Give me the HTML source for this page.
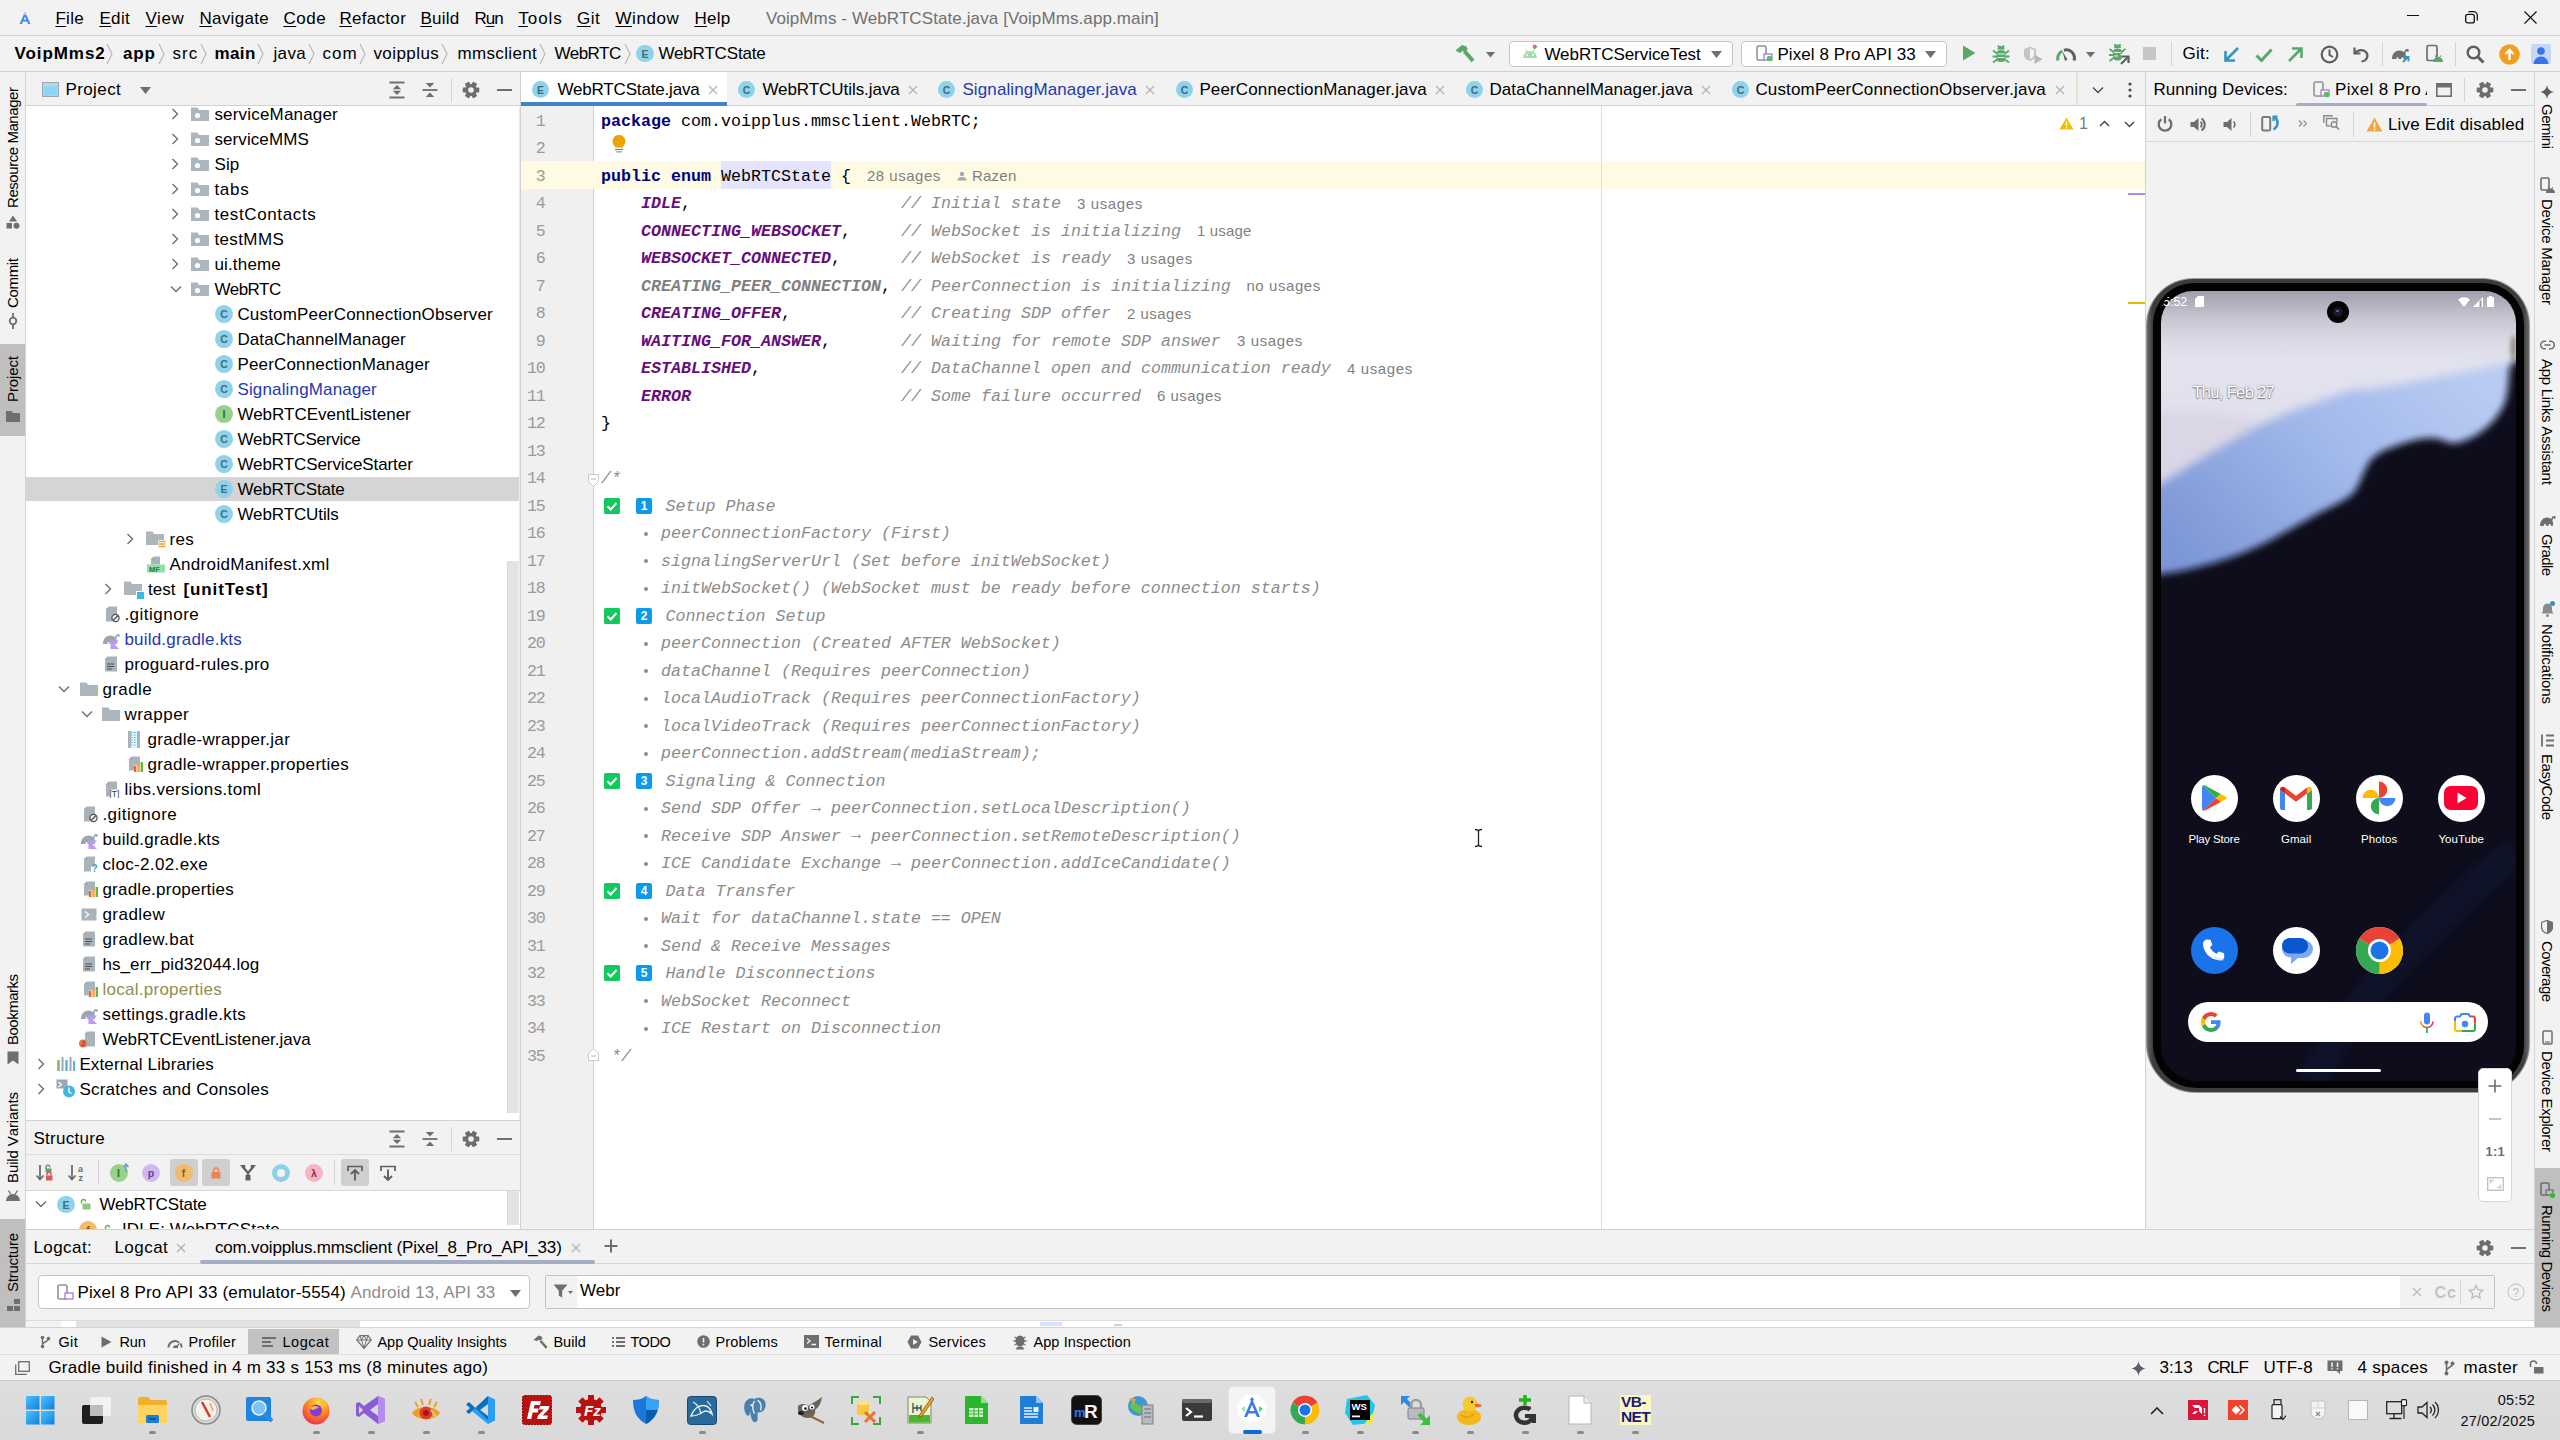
<!DOCTYPE html>
<html lang="en"><head><meta charset="utf-8"><title>VoipMms - WebRTCState.java</title>
<style>
*{box-sizing:border-box;margin:0;padding:0}
html,body{width:2560px;height:1440px;overflow:hidden;background:#f2f2f2;font-family:"Liberation Sans",sans-serif;}
.a{position:absolute;display:block}
.t{position:absolute;white-space:pre;font-kerning:none}
.ic{border-radius:50%;text-align:center;font:700 10.500px "Liberation Sans",sans-serif;}
.v{position:absolute;white-space:pre;font:400 17px "Liberation Sans",sans-serif;color:#000;transform-origin:0 0;height:24px;line-height:24px;font-kerning:none}
u{text-decoration-thickness:1px;text-underline-offset:2px}
</style></head>
<body>
<div class="a" style="left:0px;top:0px;width:2560px;height:36px;background:#f2f2f2;"></div>
<svg class="a" style="left:18.0px;top:11.0px;" width="14" height="14" viewBox="0 0 14 14"><path d="M7 1l5.500 12h-2.300l-1.100-2.600h-4.200l-1.100 2.600h-2.300z" fill="#4285f4"/><path d="M7 5.500l1.400 3.300h-2.800z" fill="#f2f2f2"/><circle cx="7" cy="3" r="1.300" fill="#9fc3ff"/></svg>
<span class="t" style="left:55.4px;top:7.0px;height:24px;line-height:24px;font:400 17px 'Liberation Sans', sans-serif;line-height:24px;color:#000;letter-spacing:0.331px;"><u>F</u>ile</span>
<span class="t" style="left:99.4px;top:7.0px;height:24px;line-height:24px;font:400 17px 'Liberation Sans', sans-serif;line-height:24px;color:#000;letter-spacing:0.368px;"><u>E</u>dit</span>
<span class="t" style="left:145.4px;top:7.0px;height:24px;line-height:24px;font:400 17px 'Liberation Sans', sans-serif;line-height:24px;color:#000;letter-spacing:0.618px;"><u>V</u>iew</span>
<span class="t" style="left:199.4px;top:7.0px;height:24px;line-height:24px;font:400 17px 'Liberation Sans', sans-serif;line-height:24px;color:#000;letter-spacing:0.327px;"><u>N</u>avigate</span>
<span class="t" style="left:283.4px;top:7.0px;height:24px;line-height:24px;font:400 17px 'Liberation Sans', sans-serif;line-height:24px;color:#000;letter-spacing:0.586px;"><u>C</u>ode</span>
<span class="t" style="left:339.4px;top:7.0px;height:24px;line-height:24px;font:400 17px 'Liberation Sans', sans-serif;line-height:24px;color:#000;letter-spacing:0.307px;"><u>R</u>efactor</span>
<span class="t" style="left:420.4px;top:7.0px;height:24px;line-height:24px;font:400 17px 'Liberation Sans', sans-serif;line-height:24px;color:#000;letter-spacing:0.272px;"><u>B</u>uild</span>
<span class="t" style="left:474.4px;top:7.0px;height:24px;line-height:24px;font:400 17px 'Liberation Sans', sans-serif;line-height:24px;color:#000;letter-spacing:-0.894px;">R<u>u</u>n</span>
<span class="t" style="left:518.4px;top:7.0px;height:24px;line-height:24px;font:400 17px 'Liberation Sans', sans-serif;line-height:24px;color:#000;letter-spacing:0.928px;"><u>T</u>ools</span>
<span class="t" style="left:576.9px;top:7.0px;height:24px;line-height:24px;font:400 17px 'Liberation Sans', sans-serif;line-height:24px;color:#000;letter-spacing:0.583px;"><u>G</u>it</span>
<span class="t" style="left:615.4px;top:7.0px;height:24px;line-height:24px;font:400 17px 'Liberation Sans', sans-serif;line-height:24px;color:#000;letter-spacing:0.586px;"><u>W</u>indow</span>
<span class="t" style="left:694.4px;top:7.0px;height:24px;line-height:24px;font:400 17px 'Liberation Sans', sans-serif;line-height:24px;color:#000;letter-spacing:0.310px;"><u>H</u>elp</span>
<span class="t" style="left:765.9px;top:7.0px;height:24px;line-height:24px;font:400 17px 'Liberation Sans', sans-serif;line-height:24px;color:#707070;letter-spacing:0.097px;">VoipMms - WebRTCState.java [VoipMms.app.main]</span>
<div class="a" style="left:2407px;top:14.7px;width:12px;height:1.3px;background:#111;"></div>
<svg class="a" style="left:2464.5px;top:10.5px;" width="13" height="13" viewBox="0 0 13 13"><rect x="0.700" y="3.300" width="8.600" height="8.600" rx="2" fill="none" stroke="#111" stroke-width="1.300"/><path d="M3.500 0.700h5a3.800 3.800 0 013.800 3.800v5" fill="none" stroke="#111" stroke-width="1.300"/></svg>
<svg class="a" style="left:2523.5px;top:10.5px;" width="13" height="13" viewBox="0 0 13 13"><path d="M0.500 0.500l12 12M12.500 0.500l-12 12" stroke="#111" stroke-width="1.200"/></svg>
<div class="a" style="left:0px;top:36px;width:2560px;height:36px;background:#f2f2f2;"></div>
<div class="a" style="left:0px;top:35px;width:2560px;height:1px;background:#d6d6d6;"></div>
<div class="a" style="left:0px;top:71px;width:2560px;height:1px;background:#d1d1d1;"></div>
<span class="t" style="left:14.4px;top:42.0px;height:24px;line-height:24px;font:700 17px 'Liberation Sans', sans-serif;line-height:24px;color:#000;letter-spacing:0.948px;">VoipMms2</span>
<span class="t" style="left:122.9px;top:42.0px;height:24px;line-height:24px;font:700 17px 'Liberation Sans', sans-serif;line-height:24px;color:#000;letter-spacing:0.833px;">app</span>
<span class="t" style="left:172.4px;top:42.0px;height:24px;line-height:24px;font:400 17px 'Liberation Sans', sans-serif;line-height:24px;color:#000;letter-spacing:1.114px;">src</span>
<span class="t" style="left:214.4px;top:42.0px;height:24px;line-height:24px;font:700 17px 'Liberation Sans', sans-serif;line-height:24px;color:#000;letter-spacing:0.404px;">main</span>
<span class="t" style="left:273.4px;top:42.0px;height:24px;line-height:24px;font:400 17px 'Liberation Sans', sans-serif;line-height:24px;color:#000;letter-spacing:0.404px;">java</span>
<span class="t" style="left:322.4px;top:42.0px;height:24px;line-height:24px;font:400 17px 'Liberation Sans', sans-serif;line-height:24px;color:#000;letter-spacing:1.137px;">com</span>
<span class="t" style="left:373.4px;top:42.0px;height:24px;line-height:24px;font:400 17px 'Liberation Sans', sans-serif;line-height:24px;color:#000;letter-spacing:0.432px;">voipplus</span>
<span class="t" style="left:457.4px;top:42.0px;height:24px;line-height:24px;font:400 17px 'Liberation Sans', sans-serif;line-height:24px;color:#000;letter-spacing:0.361px;">mmsclient</span>
<span class="t" style="left:554.4px;top:42.0px;height:24px;line-height:24px;font:400 17px 'Liberation Sans', sans-serif;line-height:24px;color:#000;letter-spacing:-0.476px;">WebRTC</span>
<svg class="a" style="left:105.5px;top:42.5px;" width="7" height="22" viewBox="0 0 7 22"><path d="M1 1l5 10-5 10" fill="none" stroke="#b4b4b4" stroke-width="1.100"/></svg>
<svg class="a" style="left:157.5px;top:42.5px;" width="7" height="22" viewBox="0 0 7 22"><path d="M1 1l5 10-5 10" fill="none" stroke="#b4b4b4" stroke-width="1.100"/></svg>
<svg class="a" style="left:199.5px;top:42.5px;" width="7" height="22" viewBox="0 0 7 22"><path d="M1 1l5 10-5 10" fill="none" stroke="#b4b4b4" stroke-width="1.100"/></svg>
<svg class="a" style="left:256.5px;top:42.5px;" width="7" height="22" viewBox="0 0 7 22"><path d="M1 1l5 10-5 10" fill="none" stroke="#b4b4b4" stroke-width="1.100"/></svg>
<svg class="a" style="left:307.5px;top:42.5px;" width="7" height="22" viewBox="0 0 7 22"><path d="M1 1l5 10-5 10" fill="none" stroke="#b4b4b4" stroke-width="1.100"/></svg>
<svg class="a" style="left:358.5px;top:42.5px;" width="7" height="22" viewBox="0 0 7 22"><path d="M1 1l5 10-5 10" fill="none" stroke="#b4b4b4" stroke-width="1.100"/></svg>
<svg class="a" style="left:440.5px;top:42.5px;" width="7" height="22" viewBox="0 0 7 22"><path d="M1 1l5 10-5 10" fill="none" stroke="#b4b4b4" stroke-width="1.100"/></svg>
<svg class="a" style="left:538.5px;top:42.5px;" width="7" height="22" viewBox="0 0 7 22"><path d="M1 1l5 10-5 10" fill="none" stroke="#b4b4b4" stroke-width="1.100"/></svg>
<svg class="a" style="left:623.5px;top:42.5px;" width="7" height="22" viewBox="0 0 7 22"><path d="M1 1l5 10-5 10" fill="none" stroke="#b4b4b4" stroke-width="1.100"/></svg>
<div class="a ic" style="left:636.1px;top:44.6px;width:17.8px;height:17.8px;background:#8fd3ea;color:#3f6d7d;line-height:18.8px;">E</div>
<span class="t" style="left:658.4px;top:42.0px;height:24px;line-height:24px;font:400 17px 'Liberation Sans', sans-serif;line-height:24px;color:#000;letter-spacing:-0.158px;">WebRTCState</span>
<svg class="a" style="left:1455.0px;top:44.0px;" width="20" height="19" viewBox="0 0 20 19"><path d="M0.500 6.500L7 1l4.500 1.500 1.200 3-3 2.500-2.200-1-2.500 2z" fill="#59a869"/><path d="M8 8.500l3-2.500 8.500 9.500-3 2.700z" fill="#59a869"/></svg>
<svg class="a" style="left:1485.5px;top:52.0px;" width="9" height="6" viewBox="0 0 9 6"><path d="M0 0h9l-4.500 5.500z" fill="#6e6e6e"/></svg>
<div class="a" style="left:1509px;top:40.5px;width:224px;height:26.0px;background:#fff;border:1px solid #c4c4c4;border-radius:4px;"></div>
<svg class="a" style="left:1521.0px;top:44.0px;" width="18" height="16" viewBox="0 0 18 16"><path d="M2 14a7 7 0 0114 0z" fill="#a4dcb0"/><circle cx="6" cy="11" r="1" fill="#fff"/><circle cx="12" cy="11" r="1" fill="#fff"/><path d="M4.500 5.500l1.800 2.500M13.500 5.500l-1.800 2.500" stroke="#a4dcb0" stroke-width="1.200"/><path d="M12 1l3 3M15 1l-3 3" stroke="#e05555" stroke-width="1.200"/><path d="M13 5l3-3" stroke="#59a869" stroke-width="1.400"/></svg>
<span class="t" style="left:1544.4px;top:43.0px;height:24px;line-height:24px;font:400 17px 'Liberation Sans', sans-serif;line-height:24px;color:#000;letter-spacing:-0.047px;">WebRTCServiceTest</span>
<svg class="a" style="left:1710.5px;top:50.5px;" width="11" height="7" viewBox="0 0 11 7"><path d="M0 0h11l-5.500 7z" fill="#6e6e6e"/></svg>
<div class="a" style="left:1741px;top:40.5px;width:206px;height:26.0px;background:#fff;border:1px solid #c4c4c4;border-radius:4px;"></div>
<svg class="a" style="left:1756.0px;top:45.0px;" width="18" height="18" viewBox="0 0 18 18"><rect x="1" y="1" width="9" height="14" rx="1.500" fill="none" stroke="#8a949b" stroke-width="1.600"/><rect x="8" y="9" width="8" height="6" fill="#fff" stroke="#a57bd8" stroke-width="1.300"/><circle cx="13.500" cy="13.500" r="2.800" fill="#59c25b"/></svg>
<span class="t" style="left:1777.4px;top:43.0px;height:24px;line-height:24px;font:400 17px 'Liberation Sans', sans-serif;line-height:24px;color:#000;letter-spacing:0.081px;">Pixel 8 Pro API 33</span>
<svg class="a" style="left:1924.5px;top:50.5px;" width="11" height="7" viewBox="0 0 11 7"><path d="M0 0h11l-5.500 7z" fill="#6e6e6e"/></svg>
<svg class="a" style="left:1962.0px;top:45.0px;" width="14" height="16" viewBox="0 0 14 16"><path d="M1 0.500l12.500 7.500-12.500 7.500z" fill="#59a869"/></svg>
<svg class="a" style="left:1992.0px;top:45.0px;" width="18" height="18" viewBox="0 0 18 18"><rect x="4.500" y="5" width="9" height="12" rx="4" fill="#59a869"/><path d="M5.500 4.500a3.500 3.500 0 017 0z" fill="#59a869"/><path d="M1 5.500l4 3M17 5.500l-4 3M0.500 11.500h5M17.500 11.500h-5M1 17.500l4-3M17 17.500l-4-3M6 0.500l1.500 2M12 0.500l-1.500 2" stroke="#59a869" stroke-width="1.800"/><path d="M5.500 9h7M5.500 12.500h7" stroke="#f2f2f2" stroke-width="1.100"/></svg>
<svg class="a" style="left:2023.0px;top:45.5px;" width="20" height="18" viewBox="0 0 20 18"><path d="M1 3l6-2.500 6 2.500v6c0 3-3 5-6 6-3-1-6-3-6-6z" fill="#c4c4c4"/><path d="M7 2.500v10.500c2-.8 4-2.300 4-4.500v-4.500z" fill="#f2f2f2"/><path d="M11.500 8.500l8 4.700-8 4.700z" fill="#b8b8b8"/></svg>
<svg class="a" style="left:2056.0px;top:46.0px;" width="20" height="16" viewBox="0 0 20 16"><path d="M2 14.500a8 8 0 014.500-9.500" fill="none" stroke="#59a869" stroke-width="3"/><path d="M8 4.300a8 8 0 0110 10.200" fill="none" stroke="#5e5e5e" stroke-width="3"/><path d="M6.500 5.500l5 8-2.500 1.500z" fill="#5e5e5e"/></svg>
<svg class="a" style="left:2085.5px;top:52.0px;" width="9" height="6" viewBox="0 0 9 6"><path d="M0 0h9l-4.500 5.500z" fill="#6e6e6e"/></svg>
<svg class="a" style="left:2108.5px;top:44.0px;" width="21" height="21" viewBox="0 0 21 21"><rect x="4" y="4.500" width="9" height="12" rx="4" fill="#59a869"/><path d="M5 4a3.500 3.500 0 017 0z" fill="#59a869"/><path d="M0.500 5l4 3M16.500 5l-4 3M0 11h5M0.500 17l4-3M5.500 0l1.500 2M11.500 0l-1.500 2" stroke="#59a869" stroke-width="1.800"/><path d="M5 8.500h7M5 12h4" stroke="#f2f2f2" stroke-width="1.100"/><path d="M11 10h9.500v9.500z" fill="#f2f2f2"/><path d="M13 12.500h6.500v6.500" fill="none" stroke="#5e5e5e" stroke-width="2.200"/><path d="M12 20l7-7" stroke="#5e5e5e" stroke-width="2.200"/></svg>
<div class="a" style="left:2143px;top:47px;width:13px;height:13px;background:#c6c6c6;"></div>
<div class="a" style="left:2171px;top:42px;width:1px;height:24px;background:#d4d4d4;"></div>
<span class="t" style="left:2182.4px;top:42.0px;height:24px;line-height:24px;font:400 17px 'Liberation Sans', sans-serif;line-height:24px;color:#000;letter-spacing:0.316px;">Git:</span>
<svg class="a" style="left:2223.5px;top:47.0px;" width="15" height="15" viewBox="0 0 15 15"><path d="M14 1L2.500 12.500M1.500 4v9.500h9.500" fill="none" stroke="#3592c4" stroke-width="2.600"/></svg>
<svg class="a" style="left:2255.0px;top:47.5px;" width="18" height="14" viewBox="0 0 18 14"><path d="M1.500 7.500l5 5 10-11" fill="none" stroke="#59a869" stroke-width="3"/></svg>
<svg class="a" style="left:2287.5px;top:47.0px;" width="15" height="15" viewBox="0 0 15 15"><path d="M1 14L12.500 2.500M4 1.500h9.500v9.500" fill="none" stroke="#59a869" stroke-width="2.600"/></svg>
<svg class="a" style="left:2319.5px;top:44.5px;" width="19" height="19" viewBox="0 0 19 19"><circle cx="9.500" cy="9.500" r="7.800" fill="none" stroke="#5e5e5e" stroke-width="2.200"/><path d="M9.500 4.500v5.500l3.500 2" fill="none" stroke="#5e5e5e" stroke-width="2"/></svg>
<svg class="a" style="left:2352.5px;top:45.5px;" width="17" height="17" viewBox="0 0 17 17"><path d="M1.500 1.500v6h6" fill="none" stroke="#5e5e5e" stroke-width="2.200"/><path d="M2 7.500c2.500-4 8-4.500 11-1.500 3 3.500 1 9-4.500 9.500" fill="none" stroke="#5e5e5e" stroke-width="2.200"/></svg>
<div class="a" style="left:2382px;top:42px;width:1px;height:24px;background:#d4d4d4;"></div>
<svg class="a" style="left:2391.0px;top:45.0px;" width="22" height="18" viewBox="0 0 22 18"><path d="M1 14c0-5 3-8.500 7.500-8.500 2.200 0 3.500.8 4.300 1.800.7-1.600 1.500-3.600 3.600-3.400 1.800.2 2 2.300.6 2.800-.9.3-1.500-.3-1.300-1-.9.4-1 1.700-1.400 3.200 1.100 2 .9 4.100.7 5.100h-2.500c0-1-.2-2-1-2-.9 0-1 1-1 2h-3c0-1-.2-2-1-2s-1 1-1 2z" fill="#6e6e6e"/><path d="M12 17l5-5M13 12h4.500v4.500" fill="none" stroke="#3592c4" stroke-width="1.800"/></svg>
<svg class="a" style="left:2425.0px;top:44.0px;" width="20" height="20" viewBox="0 0 20 20"><rect x="2" y="1.500" width="10" height="15" rx="1.500" fill="none" stroke="#6e6e6e" stroke-width="1.700"/><path d="M8 18a5 5 0 0110 0z" fill="#59a869"/><path d="M10 11.500l1.500 2M16 11.500l-1.500 2" stroke="#59a869" stroke-width="1.200"/></svg>
<div class="a" style="left:2455px;top:42px;width:1px;height:24px;background:#d4d4d4;"></div>
<svg class="a" style="left:2465.5px;top:45.0px;" width="19" height="19" viewBox="0 0 19 19"><circle cx="7.500" cy="7.500" r="5.800" fill="none" stroke="#5e5e5e" stroke-width="2.400"/><path d="M11.500 11.500l6 6" stroke="#5e5e5e" stroke-width="3"/></svg>
<svg class="a" style="left:2498.5px;top:43.5px;" width="21" height="21" viewBox="0 0 21 21"><circle cx="10.500" cy="10.500" r="10.300" fill="#f0a020"/><path d="M10.500 16V7M6.500 10l4-4 4 4" fill="none" stroke="#fff" stroke-width="2.400"/></svg>
<svg class="a" style="left:2531.0px;top:44.0px;" width="20" height="20" viewBox="0 0 20 20"><rect width="20" height="20" rx="2" fill="#c5d6f7"/><circle cx="10" cy="7" r="3.800" fill="#3574f0"/><path d="M2.500 20a7.500 7.500 0 0115 0z" fill="#3574f0"/></svg>
<div class="a" style="left:0px;top:72px;width:26px;height:1255px;background:#f2f2f2;"></div>
<div class="a" style="left:25px;top:72px;width:1px;height:1255px;background:#d4d4d4;"></div>
<div class="a" style="left:0px;top:344px;width:25px;height:91.5px;background:#bfbfbf;"></div>
<div class="a" style="left:0px;top:1219px;width:25px;height:108px;background:#bfbfbf;"></div>
<span class="v" style="left:1.1999999999999993px;top:208px;transform:rotate(-90deg);color:#000;font-size:15px;letter-spacing:-0.439px;">Resource Manager</span>
<svg class="a" style="left:6.0px;top:215.0px;" width="14" height="14" viewBox="0 0 14 14"><path d="M7 0.500l4 6h-8z" fill="#6e6e6e"/><rect x="0.500" y="8" width="5.500" height="5.500" fill="#6e6e6e"/><circle cx="10.500" cy="10.700" r="3" fill="#6e6e6e"/></svg>
<span class="v" style="left:1.1999999999999993px;top:308px;transform:rotate(-90deg);color:#000;font-size:15px;letter-spacing:-0.334px;">Commit</span>
<svg class="a" style="left:6.0px;top:313.0px;" width="14" height="16" viewBox="0 0 14 16"><circle cx="7" cy="8" r="3.300" fill="none" stroke="#6e6e6e" stroke-width="1.800"/><path d="M7 0v4.500M7 11.500v4.500" stroke="#6e6e6e" stroke-width="1.800"/></svg>
<span class="v" style="left:1.1999999999999993px;top:402px;transform:rotate(-90deg);color:#000;font-size:15px;letter-spacing:-0.115px;">Project</span>
<svg class="a" style="left:6.0px;top:410.0px;" width="14" height="12" viewBox="0 0 14 12"><path d="M0 1h5.500l1.500 2h7v9h-14z" fill="#6e6e6e"/></svg>
<span class="v" style="left:1.1999999999999993px;top:1045px;transform:rotate(-90deg);color:#000;font-size:15px;letter-spacing:-0.504px;">Bookmarks</span>
<svg class="a" style="left:7.0px;top:1051.0px;" width="12" height="14" viewBox="0 0 12 14"><path d="M0.500 0.500h11v13l-5.500-4-5.500 4z" fill="#6e6e6e"/></svg>
<span class="v" style="left:1.1999999999999993px;top:1183px;transform:rotate(-90deg);color:#000;font-size:15px;letter-spacing:-0.111px;">Build Variants</span>
<svg class="a" style="left:6.0px;top:1189.5px;" width="14" height="11" viewBox="0 0 14 11"><path d="M0 11a7 7 0 0114 0z" fill="#6e6e6e"/><path d="M2.500 0.500l2.500 4M11.500 0.500l-2.500 4" stroke="#6e6e6e" stroke-width="1.300"/></svg>
<span class="v" style="left:1.1999999999999993px;top:1292px;transform:rotate(-90deg);color:#000;font-size:15px;letter-spacing:-0.232px;">Structure</span>
<svg class="a" style="left:6.5px;top:1299.0px;" width="13" height="12" viewBox="0 0 13 12"><rect x="7" y="0" width="6" height="5" fill="#6e6e6e"/><rect x="0" y="7" width="6" height="5" fill="#6e6e6e"/><rect x="7" y="7" width="6" height="5" fill="#6e6e6e"/></svg>
<div class="a" style="left:26px;top:72px;width:494px;height:35px;background:#f2f2f2;"></div>
<div class="a" style="left:26px;top:105px;width:494px;height:1px;background:#d1d1d1;"></div>
<svg class="a" style="left:41.5px;top:82.0px;" width="17" height="15" viewBox="0 0 17 15"><rect x="0.500" y="0.500" width="16" height="14" fill="#c9d0d6" stroke="#9aa7b0"/><rect x="2" y="4" width="13" height="9.500" fill="#8dd6f3"/></svg>
<span class="t" style="left:65.4px;top:78.0px;height:24px;line-height:24px;font:400 17px 'Liberation Sans', sans-serif;line-height:24px;color:#000;letter-spacing:0.413px;">Project</span>
<svg class="a" style="left:139.5px;top:86.5px;" width="11" height="7" viewBox="0 0 11 7"><path d="M0 0h11l-5.500 7z" fill="#6e6e6e"/></svg>
<svg class="a" style="left:389.0px;top:80.5px;" width="16" height="18" viewBox="0 0 16 18"><path d="M0.500 1.500h15M0.500 16.500h15" stroke="#6e6e6e" stroke-width="1.800"/><path d="M8 4l-4.200 4.200h8.400zM8 14l-4.200-4.200h8.400z" fill="#6e6e6e"/></svg>
<svg class="a" style="left:422.0px;top:80.5px;" width="16" height="18" viewBox="0 0 16 18"><path d="M0.500 9h15" stroke="#6e6e6e" stroke-width="1.800"/><path d="M8 6.500l-4.200-4.500h8.400zM8 11.500l-4.200 4.500h8.400z" fill="#6e6e6e"/></svg>
<div class="a" style="left:451px;top:78px;width:1px;height:24px;background:#d4d4d4;"></div>
<svg class="a" style="left:461.5px;top:80.5px;" width="18" height="18" viewBox="0 0 18 18"><g transform="translate(9 9)"><circle r="5.900" fill="#6e6e6e"/><rect x="-2.400" y="-8.300" width="4.800" height="5" rx=".8" fill="#6e6e6e" transform="rotate(30)"/><rect x="-2.400" y="-8.300" width="4.800" height="5" rx=".8" fill="#6e6e6e" transform="rotate(90)"/><rect x="-2.400" y="-8.300" width="4.800" height="5" rx=".8" fill="#6e6e6e" transform="rotate(150)"/><rect x="-2.400" y="-8.300" width="4.800" height="5" rx=".8" fill="#6e6e6e" transform="rotate(210)"/><rect x="-2.400" y="-8.300" width="4.800" height="5" rx=".8" fill="#6e6e6e" transform="rotate(270)"/><rect x="-2.400" y="-8.300" width="4.800" height="5" rx=".8" fill="#6e6e6e" transform="rotate(330)"/><circle r="2.800" fill="#f2f2f2"/></g></svg>
<div class="a" style="left:496.5px;top:89px;width:15px;height:2px;background:#6e6e6e"></div>
<div class="a" style="left:26px;top:106px;width:494px;height:1014px;background:#fff;"></div>
<div class="a" style="left:520px;top:72px;width:1px;height:1157px;background:#d1d1d1;"></div>
<svg class="a" style="left:171.0px;top:108.0px;" width="8" height="12" viewBox="0 0 8 12"><path d="M1.5 1l5 5-5 5" fill="none" stroke="#6e6e6e" stroke-width="1.4"/></svg>
<svg class="a" style="left:191.0px;top:106.5px;" width="18" height="14" viewBox="0 0 18 14"><path d="M0 0.500h6.500l1.700 2.500h9.800v11h-18z" fill="#adb6bd"/><circle cx="6.500" cy="8.500" r="2.600" fill="#fdfdfd"/></svg>
<span class="t" style="left:214.4px;top:103.0px;height:24px;line-height:24px;font:400 17px 'Liberation Sans', sans-serif;line-height:24px;color:#000;letter-spacing:0.188px;">serviceManager</span>
<svg class="a" style="left:171.0px;top:133.0px;" width="8" height="12" viewBox="0 0 8 12"><path d="M1.5 1l5 5-5 5" fill="none" stroke="#6e6e6e" stroke-width="1.4"/></svg>
<svg class="a" style="left:191.0px;top:131.5px;" width="18" height="14" viewBox="0 0 18 14"><path d="M0 0.500h6.500l1.700 2.500h9.800v11h-18z" fill="#adb6bd"/><circle cx="6.500" cy="8.500" r="2.600" fill="#fdfdfd"/></svg>
<span class="t" style="left:214.4px;top:128.0px;height:24px;line-height:24px;font:400 17px 'Liberation Sans', sans-serif;line-height:24px;color:#000;letter-spacing:0.098px;">serviceMMS</span>
<svg class="a" style="left:171.0px;top:158.0px;" width="8" height="12" viewBox="0 0 8 12"><path d="M1.5 1l5 5-5 5" fill="none" stroke="#6e6e6e" stroke-width="1.4"/></svg>
<svg class="a" style="left:191.0px;top:156.5px;" width="18" height="14" viewBox="0 0 18 14"><path d="M0 0.500h6.500l1.700 2.500h9.800v11h-18z" fill="#adb6bd"/><circle cx="6.500" cy="8.500" r="2.600" fill="#fdfdfd"/></svg>
<span class="t" style="left:214.4px;top:153.0px;height:24px;line-height:24px;font:400 17px 'Liberation Sans', sans-serif;line-height:24px;color:#000;letter-spacing:0.161px;">Sip</span>
<svg class="a" style="left:171.0px;top:183.0px;" width="8" height="12" viewBox="0 0 8 12"><path d="M1.5 1l5 5-5 5" fill="none" stroke="#6e6e6e" stroke-width="1.4"/></svg>
<svg class="a" style="left:191.0px;top:181.5px;" width="18" height="14" viewBox="0 0 18 14"><path d="M0 0.500h6.500l1.700 2.500h9.800v11h-18z" fill="#adb6bd"/><circle cx="6.500" cy="8.500" r="2.600" fill="#fdfdfd"/></svg>
<span class="t" style="left:214.4px;top:178.0px;height:24px;line-height:24px;font:400 17px 'Liberation Sans', sans-serif;line-height:24px;color:#000;letter-spacing:0.753px;">tabs</span>
<svg class="a" style="left:171.0px;top:208.0px;" width="8" height="12" viewBox="0 0 8 12"><path d="M1.5 1l5 5-5 5" fill="none" stroke="#6e6e6e" stroke-width="1.4"/></svg>
<svg class="a" style="left:191.0px;top:206.5px;" width="18" height="14" viewBox="0 0 18 14"><path d="M0 0.500h6.500l1.700 2.500h9.800v11h-18z" fill="#adb6bd"/><circle cx="6.500" cy="8.500" r="2.600" fill="#fdfdfd"/></svg>
<span class="t" style="left:214.4px;top:203.0px;height:24px;line-height:24px;font:400 17px 'Liberation Sans', sans-serif;line-height:24px;color:#000;letter-spacing:0.627px;">testContacts</span>
<svg class="a" style="left:171.0px;top:233.0px;" width="8" height="12" viewBox="0 0 8 12"><path d="M1.5 1l5 5-5 5" fill="none" stroke="#6e6e6e" stroke-width="1.4"/></svg>
<svg class="a" style="left:191.0px;top:231.5px;" width="18" height="14" viewBox="0 0 18 14"><path d="M0 0.500h6.500l1.700 2.500h9.800v11h-18z" fill="#adb6bd"/><circle cx="6.500" cy="8.500" r="2.600" fill="#fdfdfd"/></svg>
<span class="t" style="left:214.4px;top:228.0px;height:24px;line-height:24px;font:400 17px 'Liberation Sans', sans-serif;line-height:24px;color:#000;letter-spacing:0.390px;">testMMS</span>
<svg class="a" style="left:171.0px;top:258.0px;" width="8" height="12" viewBox="0 0 8 12"><path d="M1.5 1l5 5-5 5" fill="none" stroke="#6e6e6e" stroke-width="1.4"/></svg>
<svg class="a" style="left:191.0px;top:256.5px;" width="18" height="14" viewBox="0 0 18 14"><path d="M0 0.500h6.500l1.700 2.500h9.800v11h-18z" fill="#adb6bd"/><circle cx="6.500" cy="8.500" r="2.600" fill="#fdfdfd"/></svg>
<span class="t" style="left:214.4px;top:253.0px;height:24px;line-height:24px;font:400 17px 'Liberation Sans', sans-serif;line-height:24px;color:#000;letter-spacing:0.171px;">ui.theme</span>
<svg class="a" style="left:170.0px;top:284.5px;" width="12" height="8" viewBox="0 0 12 8"><path d="M1 1.5l5 5 5-5" fill="none" stroke="#6e6e6e" stroke-width="1.4"/></svg>
<svg class="a" style="left:191.0px;top:281.5px;" width="18" height="14" viewBox="0 0 18 14"><path d="M0 0.500h6.500l1.700 2.500h9.800v11h-18z" fill="#adb6bd"/><circle cx="6.500" cy="8.500" r="2.600" fill="#fdfdfd"/></svg>
<span class="t" style="left:214.4px;top:278.0px;height:24px;line-height:24px;font:400 17px 'Liberation Sans', sans-serif;line-height:24px;color:#000;letter-spacing:-0.476px;">WebRTC</span>
<div class="a ic" style="left:215.1px;top:305.1px;width:17.8px;height:17.8px;background:#8fd3ea;color:#3f6d7d;line-height:18.8px;">C</div>
<span class="t" style="left:237.4px;top:303.0px;height:24px;line-height:24px;font:400 17px 'Liberation Sans', sans-serif;line-height:24px;color:#000;letter-spacing:0.185px;">CustomPeerConnectionObserver</span>
<div class="a ic" style="left:215.1px;top:330.1px;width:17.8px;height:17.8px;background:#8fd3ea;color:#3f6d7d;line-height:18.8px;">C</div>
<span class="t" style="left:237.4px;top:328.0px;height:24px;line-height:24px;font:400 17px 'Liberation Sans', sans-serif;line-height:24px;color:#000;letter-spacing:0.121px;">DataChannelManager</span>
<div class="a ic" style="left:215.1px;top:355.1px;width:17.8px;height:17.8px;background:#8fd3ea;color:#3f6d7d;line-height:18.8px;">C</div>
<span class="t" style="left:237.4px;top:353.0px;height:24px;line-height:24px;font:400 17px 'Liberation Sans', sans-serif;line-height:24px;color:#000;letter-spacing:0.169px;">PeerConnectionManager</span>
<div class="a ic" style="left:215.1px;top:380.1px;width:17.8px;height:17.8px;background:#8fd3ea;color:#3f6d7d;line-height:18.8px;">C</div>
<span class="t" style="left:237.4px;top:378.0px;height:24px;line-height:24px;font:400 17px 'Liberation Sans', sans-serif;line-height:24px;color:#2238b0;letter-spacing:0.157px;">SignalingManager</span>
<div class="a ic" style="left:215.1px;top:405.1px;width:17.8px;height:17.8px;background:#97d18b;color:#2f6b28;line-height:18.8px;">I</div>
<span class="t" style="left:237.4px;top:403.0px;height:24px;line-height:24px;font:400 17px 'Liberation Sans', sans-serif;line-height:24px;color:#000;letter-spacing:0.009px;">WebRTCEventListener</span>
<div class="a ic" style="left:215.1px;top:430.1px;width:17.8px;height:17.8px;background:#8fd3ea;color:#3f6d7d;line-height:18.8px;">C</div>
<span class="t" style="left:237.4px;top:428.0px;height:24px;line-height:24px;font:400 17px 'Liberation Sans', sans-serif;line-height:24px;color:#000;letter-spacing:-0.214px;">WebRTCService</span>
<div class="a ic" style="left:215.1px;top:455.1px;width:17.8px;height:17.8px;background:#8fd3ea;color:#3f6d7d;line-height:18.8px;">C</div>
<span class="t" style="left:237.4px;top:453.0px;height:24px;line-height:24px;font:400 17px 'Liberation Sans', sans-serif;line-height:24px;color:#000;letter-spacing:-0.083px;">WebRTCServiceStarter</span>
<div class="a" style="left:26px;top:476.5px;width:494px;height:24.5px;background:#d5d5d5;"></div>
<div class="a ic" style="left:215.1px;top:480.1px;width:17.8px;height:17.8px;background:#8fd3ea;color:#3f6d7d;line-height:18.8px;">E</div>
<span class="t" style="left:237.4px;top:478.0px;height:24px;line-height:24px;font:400 17px 'Liberation Sans', sans-serif;line-height:24px;color:#000;letter-spacing:-0.158px;">WebRTCState</span>
<div class="a ic" style="left:215.1px;top:505.1px;width:17.8px;height:17.8px;background:#8fd3ea;color:#3f6d7d;line-height:18.8px;">C</div>
<span class="t" style="left:237.4px;top:503.0px;height:24px;line-height:24px;font:400 17px 'Liberation Sans', sans-serif;line-height:24px;color:#000;letter-spacing:-0.094px;">WebRTCUtils</span>
<svg class="a" style="left:126.0px;top:533.0px;" width="8" height="12" viewBox="0 0 8 12"><path d="M1.5 1l5 5-5 5" fill="none" stroke="#6e6e6e" stroke-width="1.4"/></svg>
<svg class="a" style="left:146.0px;top:530.5px;" width="18" height="14" viewBox="0 0 18 14"><path d="M0 0.500h6.500l1.700 2.500h9.800v11h-18z" fill="#adb6bd"/></svg>
<svg class="a" style="left:158.0px;top:539.5px;" width="8" height="9" viewBox="0 0 8 9"><rect width="8" height="9" fill="#fff"/><path d="M0.500 1.500h7M0.500 4h7M0.500 6.500h7" stroke="#e8a33d" stroke-width="1.400"/></svg>
<span class="t" style="left:169.4px;top:528.0px;height:24px;line-height:24px;font:400 17px 'Liberation Sans', sans-serif;line-height:24px;color:#000;letter-spacing:0.387px;">res</span>
<svg class="a" style="left:147.0px;top:555.5px;" width="18" height="17" viewBox="0 0 18 17"><path d="M8 0.5h5v8h-9v-4z" fill="#aab3ba"/><path d="M3.2 3.8L7.3 0v3.8z" fill="#9aa7b0"/><rect x="0" y="8.5" width="18" height="8" fill="#8fe0a7"/><text x="2" y="15.5" font-family="Liberation Sans, sans-serif" font-size="7.5" font-weight="700" fill="#2d7a43">MF</text></svg>
<span class="t" style="left:169.4px;top:553.0px;height:24px;line-height:24px;font:400 17px 'Liberation Sans', sans-serif;line-height:24px;color:#000;letter-spacing:0.327px;">AndroidManifest.xml</span>
<svg class="a" style="left:104.0px;top:583.0px;" width="8" height="12" viewBox="0 0 8 12"><path d="M1.5 1l5 5-5 5" fill="none" stroke="#6e6e6e" stroke-width="1.4"/></svg>
<svg class="a" style="left:124.0px;top:580.5px;" width="18" height="14" viewBox="0 0 18 14"><path d="M0 0.500h6.500l1.700 2.500h9.800v11h-18z" fill="#adb6bd"/></svg>
<svg class="a" style="left:136.0px;top:591.0px;" width="8" height="8" viewBox="0 0 8 8"><rect width="8" height="8" fill="#fff"/><rect x="1" y="1" width="7" height="7" fill="#40b6e0"/></svg>
<span class="t" style="left:148px;top:578.0px;height:24px;line-height:24px;font:400 17px 'Liberation Sans', sans-serif;line-height:24px;color:#000;">test </span>
<span class="t" style="left:183.4px;top:578.0px;height:24px;line-height:24px;font:700 17px 'Liberation Sans', sans-serif;line-height:24px;color:#000;letter-spacing:0.914px;">[unitTest]</span>
<svg class="a" style="left:103.5px;top:605.5px;" width="17" height="17" viewBox="0 0 17 17"><path d="M6 0.5h7v10h-11v-6z" fill="#aab3ba"/><path d="M1.2 3.8L5.3 0v3.8z" fill="#9aa7b0"/><rect x="2" y="4.5" width="6" height="11" fill="#aab3ba"/><circle cx="11.5" cy="12" r="3.6" fill="#f7f7f7" stroke="#4a4f52" stroke-width="1.2"/><path d="M9 14.5l5-5" stroke="#4a4f52" stroke-width="1.2"/></svg>
<span class="t" style="left:124.4px;top:603.0px;height:24px;line-height:24px;font:400 17px 'Liberation Sans', sans-serif;line-height:24px;color:#000;letter-spacing:0.496px;">.gitignore</span>
<svg class="a" style="left:101.5px;top:631.0px;" width="19" height="18" viewBox="0 0 19 18"><path d="M1 13c0-5 3-8.5 7.5-8.5 2.2 0 3.5.8 4.3 1.8.7-1.6 1.5-3.6 3.6-3.4 1.8.2 2 2.3.6 2.8-.9.3-1.5-.3-1.3-1-.9.4-1 1.700-1.400 3.200 1.100 2 .9 4.100.700 5.100h-2.500c0-1-.2-2-1-2-.9 0-1 1-1 2h-3c0-1-.2-2-1-2s-1 1-1 2z" fill="#9aa7b0"/><path d="M8.500 9.500h8.500l-4.200 4.200 4.200 4.300h-8.500z" fill="#b99bf8"/></svg>
<span class="t" style="left:124.4px;top:628.0px;height:24px;line-height:24px;font:400 17px 'Liberation Sans', sans-serif;line-height:24px;color:#2238b0;letter-spacing:0.204px;">build.gradle.kts</span>
<svg class="a" style="left:102.5px;top:655.5px;" width="17" height="17" viewBox="0 0 17 17"><path d="M6 0.5h8v15h-12v-11z" fill="#aab3ba"/><path d="M6 0.5v4h-4z" fill="#7f8b91" opacity=".0"/><path d="M1.2 3.8L5.3 0v3.8z" fill="#9aa7b0"/><path d="M4 8h7M4 10.5h7M4 13h5" stroke="#4a4f52" stroke-width="1.2"/></svg>
<span class="t" style="left:124.4px;top:653.0px;height:24px;line-height:24px;font:400 17px 'Liberation Sans', sans-serif;line-height:24px;color:#000;letter-spacing:0.297px;">proguard-rules.pro</span>
<svg class="a" style="left:58.0px;top:684.5px;" width="12" height="8" viewBox="0 0 12 8"><path d="M1 1.5l5 5 5-5" fill="none" stroke="#6e6e6e" stroke-width="1.4"/></svg>
<svg class="a" style="left:80.0px;top:681.5px;" width="18" height="14" viewBox="0 0 18 14"><path d="M0 0.500h6.500l1.700 2.500h9.800v11h-18z" fill="#adb6bd"/></svg>
<span class="t" style="left:102.4px;top:678.0px;height:24px;line-height:24px;font:400 17px 'Liberation Sans', sans-serif;line-height:24px;color:#000;letter-spacing:0.427px;">gradle</span>
<svg class="a" style="left:81.0px;top:709.5px;" width="12" height="8" viewBox="0 0 12 8"><path d="M1 1.5l5 5 5-5" fill="none" stroke="#6e6e6e" stroke-width="1.4"/></svg>
<svg class="a" style="left:102.0px;top:706.5px;" width="18" height="14" viewBox="0 0 18 14"><path d="M0 0.500h6.500l1.700 2.500h9.800v11h-18z" fill="#adb6bd"/></svg>
<span class="t" style="left:124.4px;top:703.0px;height:24px;line-height:24px;font:400 17px 'Liberation Sans', sans-serif;line-height:24px;color:#000;letter-spacing:0.496px;">wrapper</span>
<svg class="a" style="left:126.0px;top:730.5px;" width="16" height="17" viewBox="0 0 16 17"><rect x="2" y="0" width="12" height="17" fill="#aab3ba"/><rect x="5" y="0" width="6" height="17" fill="#dff3fb"/><path d="M5 1.5h6M5 4h6M5 6.5h6M5 9h6M5 11.5h6M5 14h6" stroke="#55b4dd" stroke-width="1.2" stroke-dasharray="1.5 1.5"/></svg>
<span class="t" style="left:147.4px;top:728.0px;height:24px;line-height:24px;font:400 17px 'Liberation Sans', sans-serif;line-height:24px;color:#000;letter-spacing:0.317px;">gradle-wrapper.jar</span>
<svg class="a" style="left:126.5px;top:755.5px;" width="17" height="17" viewBox="0 0 17 17"><path d="M6 0.5h7v9h-11v-5z" fill="#aab3ba"/><path d="M1.2 3.8L5.3 0v3.8z" fill="#9aa7b0"/><rect x="2" y="4.5" width="5" height="10" fill="#aab3ba"/><rect x="7" y="10" width="2.4" height="6" fill="#e8662e"/><rect x="10.3" y="8" width="2.4" height="8" fill="#f2a43a"/><rect x="13.6" y="6" width="2.4" height="10" fill="#62b543"/></svg>
<span class="t" style="left:147.4px;top:753.0px;height:24px;line-height:24px;font:400 17px 'Liberation Sans', sans-serif;line-height:24px;color:#000;letter-spacing:0.320px;">gradle-wrapper.properties</span>
<svg class="a" style="left:103.5px;top:780.5px;" width="17" height="17" viewBox="0 0 17 17"><path d="M6 0.5h7v8h-11v-4z" fill="#aab3ba"/><path d="M1.2 3.8L5.3 0v3.8z" fill="#9aa7b0"/><rect x="2" y="4.5" width="4" height="11" fill="#aab3ba"/><text x="5.5" y="16" font-family="Liberation Sans, sans-serif" font-size="8.5" fill="#33383b">[T]</text></svg>
<span class="t" style="left:124.4px;top:778.0px;height:24px;line-height:24px;font:400 17px 'Liberation Sans', sans-serif;line-height:24px;color:#000;letter-spacing:0.354px;">libs.versions.toml</span>
<svg class="a" style="left:81.5px;top:805.5px;" width="17" height="17" viewBox="0 0 17 17"><path d="M6 0.5h7v10h-11v-6z" fill="#aab3ba"/><path d="M1.2 3.8L5.3 0v3.8z" fill="#9aa7b0"/><rect x="2" y="4.5" width="6" height="11" fill="#aab3ba"/><circle cx="11.5" cy="12" r="3.6" fill="#f7f7f7" stroke="#4a4f52" stroke-width="1.2"/><path d="M9 14.5l5-5" stroke="#4a4f52" stroke-width="1.2"/></svg>
<span class="t" style="left:102.4px;top:803.0px;height:24px;line-height:24px;font:400 17px 'Liberation Sans', sans-serif;line-height:24px;color:#000;letter-spacing:0.496px;">.gitignore</span>
<svg class="a" style="left:79.5px;top:831.0px;" width="19" height="18" viewBox="0 0 19 18"><path d="M1 13c0-5 3-8.5 7.5-8.5 2.2 0 3.5.8 4.3 1.8.7-1.6 1.5-3.6 3.6-3.4 1.8.2 2 2.3.6 2.8-.9.3-1.5-.3-1.3-1-.9.4-1 1.700-1.400 3.200 1.100 2 .9 4.100.700 5.100h-2.500c0-1-.2-2-1-2-.9 0-1 1-1 2h-3c0-1-.2-2-1-2s-1 1-1 2z" fill="#9aa7b0"/><path d="M8.500 9.500h8.500l-4.200 4.200 4.200 4.300h-8.500z" fill="#b99bf8"/></svg>
<span class="t" style="left:102.4px;top:828.0px;height:24px;line-height:24px;font:400 17px 'Liberation Sans', sans-serif;line-height:24px;color:#000;letter-spacing:0.204px;">build.gradle.kts</span>
<svg class="a" style="left:81.5px;top:855.5px;" width="17" height="17" viewBox="0 0 17 17"><path d="M6 0.5h7v10h-11v-6z" fill="#aab3ba"/><path d="M1.2 3.8L5.3 0v3.8z" fill="#9aa7b0"/><rect x="2" y="4.5" width="7" height="11" fill="#aab3ba"/><text x="9.5" y="16" font-family="Liberation Sans, sans-serif" font-size="10" font-weight="700" fill="#389fd6">?</text></svg>
<span class="t" style="left:102.4px;top:853.0px;height:24px;line-height:24px;font:400 17px 'Liberation Sans', sans-serif;line-height:24px;color:#000;letter-spacing:0.356px;">cloc-2.02.exe</span>
<svg class="a" style="left:81.5px;top:880.5px;" width="17" height="17" viewBox="0 0 17 17"><path d="M6 0.5h7v9h-11v-5z" fill="#aab3ba"/><path d="M1.2 3.8L5.3 0v3.8z" fill="#9aa7b0"/><rect x="2" y="4.5" width="5" height="10" fill="#aab3ba"/><rect x="7" y="10" width="2.4" height="6" fill="#e8662e"/><rect x="10.3" y="8" width="2.4" height="8" fill="#f2a43a"/><rect x="13.6" y="6" width="2.4" height="10" fill="#62b543"/></svg>
<span class="t" style="left:102.4px;top:878.0px;height:24px;line-height:24px;font:400 17px 'Liberation Sans', sans-serif;line-height:24px;color:#000;letter-spacing:0.239px;">gradle.properties</span>
<svg class="a" style="left:81.0px;top:906.5px;" width="16" height="15" viewBox="0 0 16 15"><rect x="0.5" y="1.5" width="15" height="12" fill="#aab3ba"/><path d="M4 4.5l3.5 3-3.5 3" fill="none" stroke="#f4f6f7" stroke-width="1.6"/></svg>
<span class="t" style="left:102.4px;top:903.0px;height:24px;line-height:24px;font:400 17px 'Liberation Sans', sans-serif;line-height:24px;color:#000;letter-spacing:0.476px;">gradlew</span>
<svg class="a" style="left:80.5px;top:930.5px;" width="17" height="17" viewBox="0 0 17 17"><path d="M6 0.5h8v15h-12v-11z" fill="#aab3ba"/><path d="M6 0.5v4h-4z" fill="#7f8b91" opacity=".0"/><path d="M1.2 3.8L5.3 0v3.8z" fill="#9aa7b0"/><path d="M4 8h7M4 10.5h7M4 13h5" stroke="#4a4f52" stroke-width="1.2"/></svg>
<span class="t" style="left:102.4px;top:928.0px;height:24px;line-height:24px;font:400 17px 'Liberation Sans', sans-serif;line-height:24px;color:#000;letter-spacing:0.445px;">gradlew.bat</span>
<svg class="a" style="left:80.5px;top:955.5px;" width="17" height="17" viewBox="0 0 17 17"><path d="M6 0.5h8v15h-12v-11z" fill="#aab3ba"/><path d="M6 0.5v4h-4z" fill="#7f8b91" opacity=".0"/><path d="M1.2 3.8L5.3 0v3.8z" fill="#9aa7b0"/><path d="M4 8h7M4 10.5h7M4 13h5" stroke="#4a4f52" stroke-width="1.2"/></svg>
<span class="t" style="left:102.4px;top:953.0px;height:24px;line-height:24px;font:400 17px 'Liberation Sans', sans-serif;line-height:24px;color:#000;letter-spacing:0.105px;">hs_err_pid32044.log</span>
<svg class="a" style="left:81.5px;top:980.5px;" width="17" height="17" viewBox="0 0 17 17"><path d="M6 0.5h7v9h-11v-5z" fill="#aab3ba"/><path d="M1.2 3.8L5.3 0v3.8z" fill="#9aa7b0"/><rect x="2" y="4.5" width="5" height="10" fill="#aab3ba"/><rect x="7" y="10" width="2.4" height="6" fill="#e8662e"/><rect x="10.3" y="8" width="2.4" height="8" fill="#f2a43a"/><rect x="13.6" y="6" width="2.4" height="10" fill="#62b543"/></svg>
<span class="t" style="left:102.4px;top:978.0px;height:24px;line-height:24px;font:400 17px 'Liberation Sans', sans-serif;line-height:24px;color:#8f8f4f;letter-spacing:0.275px;">local.properties</span>
<svg class="a" style="left:79.5px;top:1006.0px;" width="19" height="18" viewBox="0 0 19 18"><path d="M1 13c0-5 3-8.5 7.5-8.5 2.2 0 3.5.8 4.3 1.8.7-1.6 1.5-3.6 3.6-3.4 1.8.2 2 2.3.6 2.8-.9.3-1.5-.3-1.3-1-.9.4-1 1.700-1.400 3.200 1.100 2 .9 4.100.700 5.100h-2.500c0-1-.2-2-1-2-.9 0-1 1-1 2h-3c0-1-.2-2-1-2s-1 1-1 2z" fill="#9aa7b0"/><path d="M8.500 9.500h8.500l-4.200 4.200 4.200 4.300h-8.500z" fill="#b99bf8"/></svg>
<span class="t" style="left:102.4px;top:1003.0px;height:24px;line-height:24px;font:400 17px 'Liberation Sans', sans-serif;line-height:24px;color:#000;letter-spacing:0.355px;">settings.gradle.kts</span>
<svg class="a" style="left:78.5px;top:1030.5px;" width="17" height="17" viewBox="0 0 17 17"><path d="M9 0.5h7v15h-10v-11z" fill="#aab3ba"/><path d="M5.2 3.8L8.3 0v3.8z" fill="#9aa7b0"/><circle cx="4" cy="12.5" r="4" fill="#e8744b"/><text x="2.3" y="15" font-family="Liberation Sans, sans-serif" font-size="6.5" fill="#5a1d0a">J</text></svg>
<span class="t" style="left:102.4px;top:1028.0px;height:24px;line-height:24px;font:400 17px 'Liberation Sans', sans-serif;line-height:24px;color:#000;letter-spacing:0.009px;">WebRTCEventListener.java</span>
<svg class="a" style="left:37.0px;top:1058.0px;" width="8" height="12" viewBox="0 0 8 12"><path d="M1.5 1l5 5-5 5" fill="none" stroke="#6e6e6e" stroke-width="1.4"/></svg>
<svg class="a" style="left:57.0px;top:1057.0px;" width="18" height="14" viewBox="0 0 18 14"><path d="M1.500 3v11M5.500 0v14M9.500 3v11M13.500 0v14M17 4v10" stroke="#9aa7b0" stroke-width="2"/><path d="M1.500 3v11" stroke="#7fb56b" stroke-width="2"/><path d="M9.500 3v11M17 4v10" stroke="#40b6e0" stroke-width="2" opacity=".7"/></svg>
<span class="t" style="left:79.4px;top:1053.0px;height:24px;line-height:24px;font:400 17px 'Liberation Sans', sans-serif;line-height:24px;color:#000;letter-spacing:0.125px;">External Libraries</span>
<svg class="a" style="left:37.0px;top:1083.0px;" width="8" height="12" viewBox="0 0 8 12"><path d="M1.5 1l5 5-5 5" fill="none" stroke="#6e6e6e" stroke-width="1.4"/></svg>
<svg class="a" style="left:56.0px;top:1078.5px;" width="20" height="19" viewBox="0 0 20 19"><path d="M0.500 0.500h11v9h-11z" fill="#9aa7b0"/><path d="M2.500 3l3 2.500-3 2.500" fill="none" stroke="#fff" stroke-width="1.200"/><circle cx="13" cy="12.500" r="6" fill="#40b6e0"/><path d="M13 8.500v4.500l2.500 1.500" fill="none" stroke="#fff" stroke-width="1.400"/></svg>
<span class="t" style="left:79.4px;top:1078.0px;height:24px;line-height:24px;font:400 17px 'Liberation Sans', sans-serif;line-height:24px;color:#000;letter-spacing:0.244px;">Scratches and Consoles</span>
<div class="a" style="left:507px;top:561px;width:12px;height:552px;background:#e3e3e3;border-left:1px solid #d9d9d9;border-right:1px solid #ececec;"></div>
<div class="a" style="left:519px;top:107px;width:1px;height:1014px;background:#ebebeb;"></div>
<div class="a" style="left:26px;top:1120px;width:494px;height:1px;background:#d1d1d1;"></div>
<div class="a" style="left:26px;top:1121px;width:494px;height:34px;background:#f2f2f2;"></div>
<span class="t" style="left:33.4px;top:1127.0px;height:24px;line-height:24px;font:400 17px 'Liberation Sans', sans-serif;line-height:24px;color:#000;letter-spacing:0.302px;">Structure</span>
<svg class="a" style="left:389.0px;top:1129.5px;" width="16" height="18" viewBox="0 0 16 18"><path d="M0.500 1.500h15M0.500 16.500h15" stroke="#6e6e6e" stroke-width="1.800"/><path d="M8 4l-4.200 4.200h8.400zM8 14l-4.200-4.200h8.400z" fill="#6e6e6e"/></svg>
<svg class="a" style="left:422.0px;top:1129.5px;" width="16" height="18" viewBox="0 0 16 18"><path d="M0.500 9h15" stroke="#6e6e6e" stroke-width="1.800"/><path d="M8 6.500l-4.200-4.500h8.400zM8 11.500l-4.200 4.500h8.400z" fill="#6e6e6e"/></svg>
<div class="a" style="left:451px;top:1127px;width:1px;height:24px;background:#d4d4d4;"></div>
<svg class="a" style="left:461.5px;top:1129.5px;" width="18" height="18" viewBox="0 0 18 18"><g transform="translate(9 9)"><circle r="5.900" fill="#6e6e6e"/><rect x="-2.400" y="-8.300" width="4.800" height="5" rx=".8" fill="#6e6e6e" transform="rotate(30)"/><rect x="-2.400" y="-8.300" width="4.800" height="5" rx=".8" fill="#6e6e6e" transform="rotate(90)"/><rect x="-2.400" y="-8.300" width="4.800" height="5" rx=".8" fill="#6e6e6e" transform="rotate(150)"/><rect x="-2.400" y="-8.300" width="4.800" height="5" rx=".8" fill="#6e6e6e" transform="rotate(210)"/><rect x="-2.400" y="-8.300" width="4.800" height="5" rx=".8" fill="#6e6e6e" transform="rotate(270)"/><rect x="-2.400" y="-8.300" width="4.800" height="5" rx=".8" fill="#6e6e6e" transform="rotate(330)"/><circle r="2.800" fill="#f2f2f2"/></g></svg>
<div class="a" style="left:496.5px;top:1138px;width:15px;height:2px;background:#6e6e6e"></div>
<div class="a" style="left:26px;top:1154px;width:494px;height:1px;background:#dcdcdc;"></div>
<div class="a" style="left:26px;top:1155px;width:494px;height:36px;background:#f2f2f2;"></div>
<svg class="a" style="left:36.0px;top:1163.5px;" width="18" height="18" viewBox="0 0 18 18"><path d="M4 1v14M0.500 11.500l3.500 4 3.500-4" fill="none" stroke="#6e6e6e" stroke-width="1.800"/><path d="M10 5V3.200a2 2 0 014 0" fill="none" stroke="#59a869" stroke-width="1.500"/><rect x="9.500" y="4.500" width="6" height="4" fill="#59a869"/><path d="M11 11.500v-1.300a2 2 0 014 0V11.500" fill="none" stroke="#db5860" stroke-width="1.500"/><rect x="10" y="11.500" width="6.500" height="5" fill="#db5860"/></svg>
<svg class="a" style="left:68.0px;top:1163.5px;" width="18" height="18" viewBox="0 0 18 18"><path d="M4 1v14M0.500 11.500l3.500 4 3.500-4" fill="none" stroke="#6e6e6e" stroke-width="1.800"/><text x="10" y="8" font-family="Liberation Sans, sans-serif" font-size="9" font-weight="700" fill="#6e6e6e">a</text><text x="10.500" y="17" font-family="Liberation Sans, sans-serif" font-size="9" font-weight="700" fill="#6e6e6e">z</text></svg>
<div class="a" style="left:98px;top:1160px;width:1px;height:25px;background:#d4d4d4;"></div>
<div class="a ic" style="left:109.5px;top:1163.5px;width:18px;height:18px;background:#97d18b;color:#2f6b28;line-height:19px;">I</div>
<svg class="a" style="left:123.0px;top:1163.0px;" width="6" height="9" viewBox="0 0 6 9"><path d="M3 9V1.500M0.500 4l2.500-3 2.500 3" fill="none" stroke="#6f9ad3" stroke-width="1.500"/></svg>
<div class="a ic" style="left:142.0px;top:1163.5px;width:18px;height:18px;background:#d0b8f3;color:#5d4191;line-height:19px;">p</div>
<div class="a" style="left:170px;top:1159px;width:28px;height:27px;background:#cfcfcf;border-radius:3px"></div>
<div class="a ic" style="left:174.5px;top:1163.5px;width:18px;height:18px;background:#f0bb6a;color:#8a5a12;line-height:19px;">f</div>
<div class="a" style="left:202px;top:1159px;width:28px;height:27px;background:#cfcfcf;border-radius:3px"></div>
<svg class="a" style="left:211.0px;top:1166.5px;" width="10" height="12" viewBox="0 0 10 12"><path d="M2.500 5V3.500a2.500 2.500 0 015 0V5" fill="none" stroke="#ee8452" stroke-width="1.500"/><rect x="0.500" y="5" width="9" height="6.500" fill="#ee8452"/></svg>
<svg class="a" style="left:240.0px;top:1164.5px;" width="16" height="16" viewBox="0 0 16 16"><path d="M2 1l6 7v4M14 1l-6 7" fill="none" stroke="#5e5e5e" stroke-width="2.200"/><rect x="5.500" y="10" width="5" height="5.500" fill="#5e5e5e"/><path d="M0.500 0.500h4v4M15.500 0.500h-4v4" fill="none" stroke="#5e5e5e" stroke-width="1.400"/></svg>
<svg class="a" style="left:272.0px;top:1163.5px;" width="18" height="18" viewBox="0 0 18 18"><circle cx="9" cy="9" r="6.500" fill="none" stroke="#8dd0ea" stroke-width="5"/></svg>
<div class="a ic" style="left:305.0px;top:1163.5px;width:18px;height:18px;background:#f6b4c2;color:#8c2f45;line-height:19px;">λ</div>
<div class="a" style="left:334px;top:1160px;width:1px;height:25px;background:#d4d4d4;"></div>
<div class="a" style="left:341px;top:1159px;width:28px;height:27px;background:#cfcfcf;border-radius:3px"></div>
<svg class="a" style="left:347.0px;top:1164.5px;" width="16" height="16" viewBox="0 0 16 16"><path d="M1 6V1.500h14V6" fill="none" stroke="#5e5e5e" stroke-width="1.700"/><path d="M8 15.500V5.500M4 9l4-4 4 4" fill="none" stroke="#5e5e5e" stroke-width="1.900"/></svg>
<svg class="a" style="left:380.0px;top:1164.5px;" width="16" height="16" viewBox="0 0 16 16"><path d="M1 6V1.500h14V6" fill="none" stroke="#5e5e5e" stroke-width="1.700"/><path d="M8 4.500v10M4 11l4 4 4-4" fill="none" stroke="#5e5e5e" stroke-width="1.900"/></svg>
<div class="a" style="left:26px;top:1190px;width:494px;height:1px;background:#d6d6d6;"></div>
<div class="a" style="left:26px;top:1191px;width:494px;height:38px;background:#fff;"></div>
<svg class="a" style="left:35.0px;top:1200.0px;" width="12" height="8" viewBox="0 0 12 8"><path d="M1 1.5l5 5 5-5" fill="none" stroke="#6e6e6e" stroke-width="1.4"/></svg>
<div class="a ic" style="left:57.1px;top:1195.6px;width:17.8px;height:17.8px;background:#8fd3ea;color:#3f6d7d;line-height:18.8px;">E</div>
<svg class="a" style="left:80.0px;top:1198.0px;" width="11" height="12" viewBox="0 0 11 12"><path d="M1.500 5.500V3.500a2 2 0 014 0" fill="none" stroke="#62b543" stroke-width="1.400"/><rect x="2.500" y="5.500" width="8" height="6" fill="#8fc97d"/></svg>
<span class="t" style="left:99.4px;top:1193.0px;height:24px;line-height:24px;font:400 17px 'Liberation Sans', sans-serif;line-height:24px;color:#000;letter-spacing:-0.158px;">WebRTCState</span>
<div class="a" style="left:26px;top:1216px;width:494px;height:13px;background:#fff;overflow:hidden"><div class="a ic" style="left:53px;top:5px;width:18px;height:18px;background:#f0bb6a;color:#8a5a12;line-height:18px">f</div><svg class="a" style="left:78px;top:8px" width="11" height="12" viewBox="0 0 11 12"><path d="M1.500 5.500V3.500a2 2 0 014 0" fill="none" stroke="#62b543" stroke-width="1.400"/><rect x="2.500" y="5.500" width="8" height="6" fill="#8fc97d"/></svg><span class="t" style="left:96px;top:2px;font:400 17px 'Liberation Sans',sans-serif;height:24px;line-height:24px;letter-spacing:.1px">IDLE: WebRTCState</span></div>
<div class="a" style="left:507px;top:1191px;width:12px;height:34px;background:#e3e3e3;border-left:1px solid #d9d9d9;"></div>
<div class="a" style="left:521px;top:72px;width:1624px;height:35px;background:#f2f2f2;"></div>
<div class="a" style="left:521px;top:105px;width:1624px;height:1px;background:#d1d1d1;"></div>
<div class="a" style="left:521px;top:72px;width:206px;height:33px;background:#fff;"></div>
<div class="a" style="left:521px;top:102px;width:206px;height:4px;background:#4083c9;"></div>
<div class="a ic" style="left:531.75px;top:80.75px;width:17.5px;height:17.5px;background:#8fd3ea;color:#3f6d7d;line-height:18.5px;">E</div>
<span class="t" style="left:557.4px;top:78.0px;height:24px;line-height:24px;font:400 17px 'Liberation Sans', sans-serif;line-height:24px;color:#000;letter-spacing:-0.166px;">WebRTCState.java</span>
<svg class="a" style="left:708.0px;top:85.0px;" width="10" height="10" viewBox="0 0 10 10"><path d="M1 1l8 8M9 1l-8 8" stroke="#b4b4b4" stroke-width="1.2"/></svg>
<div class="a ic" style="left:737.75px;top:80.75px;width:17.5px;height:17.5px;background:#8fd3ea;color:#3f6d7d;line-height:18.5px;">C</div>
<span class="t" style="left:762.4px;top:78.0px;height:24px;line-height:24px;font:400 17px 'Liberation Sans', sans-serif;line-height:24px;color:#000;letter-spacing:-0.057px;">WebRTCUtils.java</span>
<svg class="a" style="left:908.0px;top:85.0px;" width="10" height="10" viewBox="0 0 10 10"><path d="M1 1l8 8M9 1l-8 8" stroke="#b4b4b4" stroke-width="1.2"/></svg>
<div class="a ic" style="left:937.75px;top:80.75px;width:17.5px;height:17.5px;background:#8fd3ea;color:#3f6d7d;line-height:18.5px;">C</div>
<span class="t" style="left:962.4px;top:78.0px;height:24px;line-height:24px;font:400 17px 'Liberation Sans', sans-serif;line-height:24px;color:#2238b0;letter-spacing:0.119px;">SignalingManager.java</span>
<svg class="a" style="left:1145.0px;top:85.0px;" width="10" height="10" viewBox="0 0 10 10"><path d="M1 1l8 8M9 1l-8 8" stroke="#b4b4b4" stroke-width="1.2"/></svg>
<div class="a ic" style="left:1175.75px;top:80.75px;width:17.5px;height:17.5px;background:#8fd3ea;color:#3f6d7d;line-height:18.5px;">C</div>
<span class="t" style="left:1199.4px;top:78.0px;height:24px;line-height:24px;font:400 17px 'Liberation Sans', sans-serif;line-height:24px;color:#000;letter-spacing:0.137px;">PeerConnectionManager.java</span>
<svg class="a" style="left:1435.0px;top:85.0px;" width="10" height="10" viewBox="0 0 10 10"><path d="M1 1l8 8M9 1l-8 8" stroke="#b4b4b4" stroke-width="1.2"/></svg>
<div class="a ic" style="left:1465.75px;top:80.75px;width:17.5px;height:17.5px;background:#8fd3ea;color:#3f6d7d;line-height:18.5px;">C</div>
<span class="t" style="left:1489.4px;top:78.0px;height:24px;line-height:24px;font:400 17px 'Liberation Sans', sans-serif;line-height:24px;color:#000;letter-spacing:0.095px;">DataChannelManager.java</span>
<svg class="a" style="left:1701.0px;top:85.0px;" width="10" height="10" viewBox="0 0 10 10"><path d="M1 1l8 8M9 1l-8 8" stroke="#b4b4b4" stroke-width="1.2"/></svg>
<div class="a ic" style="left:1731.75px;top:80.75px;width:17.5px;height:17.5px;background:#8fd3ea;color:#3f6d7d;line-height:18.5px;">C</div>
<span class="t" style="left:1755.4px;top:78.0px;height:24px;line-height:24px;font:400 17px 'Liberation Sans', sans-serif;line-height:24px;color:#000;letter-spacing:0.157px;">CustomPeerConnectionObserver.java</span>
<svg class="a" style="left:2055.0px;top:85.0px;" width="10" height="10" viewBox="0 0 10 10"><path d="M1 1l8 8M9 1l-8 8" stroke="#b4b4b4" stroke-width="1.2"/></svg>
<div class="a" style="left:2076px;top:72px;width:2px;height:33px;background:#d9e8cf;"></div>
<svg class="a" style="left:2092.0px;top:86.0px;" width="12" height="8" viewBox="0 0 12 8"><path d="M1 1.5l5 5 5-5" fill="none" stroke="#4a4a4a" stroke-width="1.4"/></svg>
<svg class="a" style="left:2128.0px;top:81.5px;" width="4" height="16" viewBox="0 0 4 16"><circle cx="2" cy="2" r="1.600" fill="#4a4a4a"/><circle cx="2" cy="8" r="1.600" fill="#4a4a4a"/><circle cx="2" cy="14" r="1.600" fill="#4a4a4a"/></svg>
<div class="a" style="left:521px;top:106px;width:1624px;height:1123px;background:#fff;"></div>
<div class="a" style="left:521px;top:106px;width:72px;height:1123px;background:#f0f0f0;"></div>
<div class="a" style="left:593px;top:106px;width:1px;height:1123px;background:#d0d0d0;"></div>
<div class="a" style="left:521px;top:161px;width:1624px;height:27.5px;background:#fffae3;"></div>
<div class="a" style="left:521px;top:161px;width:72px;height:27.5px;background:#fffae3;"></div>
<div class="a" style="left:721px;top:161px;width:110px;height:27.5px;background:#e4e4ff;"></div>
<div class="a" style="left:1601px;top:106px;width:1px;height:1123px;background:#dcdcdc;"></div>
<span class="t" style="right:2015.5px;top:109.5px;height:24px;line-height:24px;font:400 16.667px 'Liberation Mono', monospace;line-height:24px;color:#9a9a9a;letter-spacing:-1.300px;">1</span>
<span class="t" style="right:2015.5px;top:137.0px;height:24px;line-height:24px;font:400 16.667px 'Liberation Mono', monospace;line-height:24px;color:#9a9a9a;letter-spacing:-1.300px;">2</span>
<span class="t" style="right:2015.5px;top:164.5px;height:24px;line-height:24px;font:400 16.667px 'Liberation Mono', monospace;line-height:24px;color:#9a9a9a;letter-spacing:-1.300px;">3</span>
<span class="t" style="right:2015.5px;top:192.0px;height:24px;line-height:24px;font:400 16.667px 'Liberation Mono', monospace;line-height:24px;color:#9a9a9a;letter-spacing:-1.300px;">4</span>
<span class="t" style="right:2015.5px;top:219.5px;height:24px;line-height:24px;font:400 16.667px 'Liberation Mono', monospace;line-height:24px;color:#9a9a9a;letter-spacing:-1.300px;">5</span>
<span class="t" style="right:2015.5px;top:247.0px;height:24px;line-height:24px;font:400 16.667px 'Liberation Mono', monospace;line-height:24px;color:#9a9a9a;letter-spacing:-1.300px;">6</span>
<span class="t" style="right:2015.5px;top:274.5px;height:24px;line-height:24px;font:400 16.667px 'Liberation Mono', monospace;line-height:24px;color:#9a9a9a;letter-spacing:-1.300px;">7</span>
<span class="t" style="right:2015.5px;top:302.0px;height:24px;line-height:24px;font:400 16.667px 'Liberation Mono', monospace;line-height:24px;color:#9a9a9a;letter-spacing:-1.300px;">8</span>
<span class="t" style="right:2015.5px;top:329.5px;height:24px;line-height:24px;font:400 16.667px 'Liberation Mono', monospace;line-height:24px;color:#9a9a9a;letter-spacing:-1.300px;">9</span>
<span class="t" style="right:2015.5px;top:357.0px;height:24px;line-height:24px;font:400 16.667px 'Liberation Mono', monospace;line-height:24px;color:#9a9a9a;letter-spacing:-1.300px;">10</span>
<span class="t" style="right:2015.5px;top:384.5px;height:24px;line-height:24px;font:400 16.667px 'Liberation Mono', monospace;line-height:24px;color:#9a9a9a;letter-spacing:-1.300px;">11</span>
<span class="t" style="right:2015.5px;top:412.0px;height:24px;line-height:24px;font:400 16.667px 'Liberation Mono', monospace;line-height:24px;color:#9a9a9a;letter-spacing:-1.300px;">12</span>
<span class="t" style="right:2015.5px;top:439.5px;height:24px;line-height:24px;font:400 16.667px 'Liberation Mono', monospace;line-height:24px;color:#9a9a9a;letter-spacing:-1.300px;">13</span>
<span class="t" style="right:2015.5px;top:467.0px;height:24px;line-height:24px;font:400 16.667px 'Liberation Mono', monospace;line-height:24px;color:#9a9a9a;letter-spacing:-1.300px;">14</span>
<span class="t" style="right:2015.5px;top:494.5px;height:24px;line-height:24px;font:400 16.667px 'Liberation Mono', monospace;line-height:24px;color:#9a9a9a;letter-spacing:-1.300px;">15</span>
<span class="t" style="right:2015.5px;top:522.0px;height:24px;line-height:24px;font:400 16.667px 'Liberation Mono', monospace;line-height:24px;color:#9a9a9a;letter-spacing:-1.300px;">16</span>
<span class="t" style="right:2015.5px;top:549.5px;height:24px;line-height:24px;font:400 16.667px 'Liberation Mono', monospace;line-height:24px;color:#9a9a9a;letter-spacing:-1.300px;">17</span>
<span class="t" style="right:2015.5px;top:577.0px;height:24px;line-height:24px;font:400 16.667px 'Liberation Mono', monospace;line-height:24px;color:#9a9a9a;letter-spacing:-1.300px;">18</span>
<span class="t" style="right:2015.5px;top:604.5px;height:24px;line-height:24px;font:400 16.667px 'Liberation Mono', monospace;line-height:24px;color:#9a9a9a;letter-spacing:-1.300px;">19</span>
<span class="t" style="right:2015.5px;top:632.0px;height:24px;line-height:24px;font:400 16.667px 'Liberation Mono', monospace;line-height:24px;color:#9a9a9a;letter-spacing:-1.300px;">20</span>
<span class="t" style="right:2015.5px;top:659.5px;height:24px;line-height:24px;font:400 16.667px 'Liberation Mono', monospace;line-height:24px;color:#9a9a9a;letter-spacing:-1.300px;">21</span>
<span class="t" style="right:2015.5px;top:687.0px;height:24px;line-height:24px;font:400 16.667px 'Liberation Mono', monospace;line-height:24px;color:#9a9a9a;letter-spacing:-1.300px;">22</span>
<span class="t" style="right:2015.5px;top:714.5px;height:24px;line-height:24px;font:400 16.667px 'Liberation Mono', monospace;line-height:24px;color:#9a9a9a;letter-spacing:-1.300px;">23</span>
<span class="t" style="right:2015.5px;top:742.0px;height:24px;line-height:24px;font:400 16.667px 'Liberation Mono', monospace;line-height:24px;color:#9a9a9a;letter-spacing:-1.300px;">24</span>
<span class="t" style="right:2015.5px;top:769.5px;height:24px;line-height:24px;font:400 16.667px 'Liberation Mono', monospace;line-height:24px;color:#9a9a9a;letter-spacing:-1.300px;">25</span>
<span class="t" style="right:2015.5px;top:797.0px;height:24px;line-height:24px;font:400 16.667px 'Liberation Mono', monospace;line-height:24px;color:#9a9a9a;letter-spacing:-1.300px;">26</span>
<span class="t" style="right:2015.5px;top:824.5px;height:24px;line-height:24px;font:400 16.667px 'Liberation Mono', monospace;line-height:24px;color:#9a9a9a;letter-spacing:-1.300px;">27</span>
<span class="t" style="right:2015.5px;top:852.0px;height:24px;line-height:24px;font:400 16.667px 'Liberation Mono', monospace;line-height:24px;color:#9a9a9a;letter-spacing:-1.300px;">28</span>
<span class="t" style="right:2015.5px;top:879.5px;height:24px;line-height:24px;font:400 16.667px 'Liberation Mono', monospace;line-height:24px;color:#9a9a9a;letter-spacing:-1.300px;">29</span>
<span class="t" style="right:2015.5px;top:907.0px;height:24px;line-height:24px;font:400 16.667px 'Liberation Mono', monospace;line-height:24px;color:#9a9a9a;letter-spacing:-1.300px;">30</span>
<span class="t" style="right:2015.5px;top:934.5px;height:24px;line-height:24px;font:400 16.667px 'Liberation Mono', monospace;line-height:24px;color:#9a9a9a;letter-spacing:-1.300px;">31</span>
<span class="t" style="right:2015.5px;top:962.0px;height:24px;line-height:24px;font:400 16.667px 'Liberation Mono', monospace;line-height:24px;color:#9a9a9a;letter-spacing:-1.300px;">32</span>
<span class="t" style="right:2015.5px;top:989.5px;height:24px;line-height:24px;font:400 16.667px 'Liberation Mono', monospace;line-height:24px;color:#9a9a9a;letter-spacing:-1.300px;">33</span>
<span class="t" style="right:2015.5px;top:1017.0px;height:24px;line-height:24px;font:400 16.667px 'Liberation Mono', monospace;line-height:24px;color:#9a9a9a;letter-spacing:-1.300px;">34</span>
<span class="t" style="right:2015.5px;top:1044.5px;height:24px;line-height:24px;font:400 16.667px 'Liberation Mono', monospace;line-height:24px;color:#9a9a9a;letter-spacing:-1.300px;">35</span>
<span class="t" style="left:601px;top:109.5px;height:24px;line-height:24px;font:700 16.667px 'Liberation Mono', monospace;line-height:24px;color:#000080;">package</span>
<span class="t" style="left:681px;top:109.5px;height:24px;line-height:24px;font:400 16.667px 'Liberation Mono', monospace;line-height:24px;color:#000;">com.voipplus.mmsclient.WebRTC;</span>
<span class="t" style="left:601px;top:164.5px;height:24px;line-height:24px;font:700 16.667px 'Liberation Mono', monospace;line-height:24px;color:#000080;">public enum</span>
<span class="t" style="left:721px;top:164.5px;height:24px;line-height:24px;font:400 16.667px 'Liberation Mono', monospace;line-height:24px;color:#000;">WebRTCState {</span>
<span class="t" style="left:866.9px;top:164.0px;height:24px;line-height:24px;font:400 15px 'Liberation Sans', sans-serif;line-height:24px;color:#7f7f7f;letter-spacing:0.521px;">28 usages</span>
<svg class="a" style="left:957.0px;top:170.5px;" width="10" height="10" viewBox="0 0 10 10"><circle cx="5" cy="3" r="2.200" fill="#a8a8a8"/><path d="M0.500 9.500a4.500 3.500 0 019 0z" fill="#a8a8a8"/></svg>
<span class="t" style="left:971.9px;top:164.0px;height:24px;line-height:24px;font:400 15px 'Liberation Sans', sans-serif;line-height:24px;color:#7f7f7f;letter-spacing:0.260px;">Razen</span>
<span class="t" style="left:641px;top:192.0px;height:24px;line-height:24px;font:italic 700 16.667px 'Liberation Mono', monospace;line-height:24px;color:#660e7a;">IDLE</span>
<span class="t" style="left:681px;top:192.0px;height:24px;line-height:24px;font:400 16.667px 'Liberation Mono', monospace;line-height:24px;color:#000;">,</span>
<span class="t" style="left:901px;top:192.0px;height:24px;line-height:24px;font:italic 400 16.667px 'Liberation Mono', monospace;line-height:24px;color:#8c8c8c;">// Initial state</span>
<span class="t" style="left:1076.9px;top:191.5px;height:24px;line-height:24px;font:400 15px 'Liberation Sans', sans-serif;line-height:24px;color:#7f7f7f;letter-spacing:0.644px;">3 usages</span>
<span class="t" style="left:641px;top:219.5px;height:24px;line-height:24px;font:italic 700 16.667px 'Liberation Mono', monospace;line-height:24px;color:#660e7a;">CONNECTING_WEBSOCKET</span>
<span class="t" style="left:841px;top:219.5px;height:24px;line-height:24px;font:400 16.667px 'Liberation Mono', monospace;line-height:24px;color:#000;">,</span>
<span class="t" style="left:901px;top:219.5px;height:24px;line-height:24px;font:italic 400 16.667px 'Liberation Mono', monospace;line-height:24px;color:#8c8c8c;">// WebSocket is initializing</span>
<span class="t" style="left:1196.9px;top:219.0px;height:24px;line-height:24px;font:400 15px 'Liberation Sans', sans-serif;line-height:24px;color:#7f7f7f;letter-spacing:0.168px;">1 usage</span>
<span class="t" style="left:641px;top:247.0px;height:24px;line-height:24px;font:italic 700 16.667px 'Liberation Mono', monospace;line-height:24px;color:#660e7a;">WEBSOCKET_CONNECTED</span>
<span class="t" style="left:831px;top:247.0px;height:24px;line-height:24px;font:400 16.667px 'Liberation Mono', monospace;line-height:24px;color:#000;">,</span>
<span class="t" style="left:901px;top:247.0px;height:24px;line-height:24px;font:italic 400 16.667px 'Liberation Mono', monospace;line-height:24px;color:#8c8c8c;">// WebSocket is ready</span>
<span class="t" style="left:1126.9px;top:246.5px;height:24px;line-height:24px;font:400 15px 'Liberation Sans', sans-serif;line-height:24px;color:#7f7f7f;letter-spacing:0.644px;">3 usages</span>
<span class="t" style="left:641px;top:274.5px;height:24px;line-height:24px;font:italic 700 16.667px 'Liberation Mono', monospace;line-height:24px;color:#808080;">CREATING_PEER_CONNECTION</span>
<span class="t" style="left:881px;top:274.5px;height:24px;line-height:24px;font:400 16.667px 'Liberation Mono', monospace;line-height:24px;color:#000;">,</span>
<span class="t" style="left:901px;top:274.5px;height:24px;line-height:24px;font:italic 400 16.667px 'Liberation Mono', monospace;line-height:24px;color:#8c8c8c;">// PeerConnection is initializing</span>
<span class="t" style="left:1246.4px;top:274.0px;height:24px;line-height:24px;font:400 15px 'Liberation Sans', sans-serif;line-height:24px;color:#7f7f7f;letter-spacing:0.583px;">no usages</span>
<span class="t" style="left:641px;top:302.0px;height:24px;line-height:24px;font:italic 700 16.667px 'Liberation Mono', monospace;line-height:24px;color:#660e7a;">CREATING_OFFER</span>
<span class="t" style="left:781px;top:302.0px;height:24px;line-height:24px;font:400 16.667px 'Liberation Mono', monospace;line-height:24px;color:#000;">,</span>
<span class="t" style="left:901px;top:302.0px;height:24px;line-height:24px;font:italic 400 16.667px 'Liberation Mono', monospace;line-height:24px;color:#8c8c8c;">// Creating SDP offer</span>
<span class="t" style="left:1126.9px;top:301.5px;height:24px;line-height:24px;font:400 15px 'Liberation Sans', sans-serif;line-height:24px;color:#7f7f7f;letter-spacing:0.501px;">2 usages</span>
<span class="t" style="left:641px;top:329.5px;height:24px;line-height:24px;font:italic 700 16.667px 'Liberation Mono', monospace;line-height:24px;color:#660e7a;">WAITING_FOR_ANSWER</span>
<span class="t" style="left:821px;top:329.5px;height:24px;line-height:24px;font:400 16.667px 'Liberation Mono', monospace;line-height:24px;color:#000;">,</span>
<span class="t" style="left:901px;top:329.5px;height:24px;line-height:24px;font:italic 400 16.667px 'Liberation Mono', monospace;line-height:24px;color:#8c8c8c;">// Waiting for remote SDP answer</span>
<span class="t" style="left:1236.9px;top:329.0px;height:24px;line-height:24px;font:400 15px 'Liberation Sans', sans-serif;line-height:24px;color:#7f7f7f;letter-spacing:0.644px;">3 usages</span>
<span class="t" style="left:641px;top:357.0px;height:24px;line-height:24px;font:italic 700 16.667px 'Liberation Mono', monospace;line-height:24px;color:#660e7a;">ESTABLISHED</span>
<span class="t" style="left:751px;top:357.0px;height:24px;line-height:24px;font:400 16.667px 'Liberation Mono', monospace;line-height:24px;color:#000;">,</span>
<span class="t" style="left:901px;top:357.0px;height:24px;line-height:24px;font:italic 400 16.667px 'Liberation Mono', monospace;line-height:24px;color:#8c8c8c;">// DataChannel open and communication ready</span>
<span class="t" style="left:1346.9px;top:356.5px;height:24px;line-height:24px;font:400 15px 'Liberation Sans', sans-serif;line-height:24px;color:#7f7f7f;letter-spacing:0.644px;">4 usages</span>
<span class="t" style="left:641px;top:384.5px;height:24px;line-height:24px;font:italic 700 16.667px 'Liberation Mono', monospace;line-height:24px;color:#660e7a;">ERROR</span>
<span class="t" style="left:901px;top:384.5px;height:24px;line-height:24px;font:italic 400 16.667px 'Liberation Mono', monospace;line-height:24px;color:#8c8c8c;">// Some failure occurred</span>
<span class="t" style="left:1156.9px;top:384.0px;height:24px;line-height:24px;font:400 15px 'Liberation Sans', sans-serif;line-height:24px;color:#7f7f7f;letter-spacing:0.501px;">6 usages</span>
<span class="t" style="left:601px;top:412.0px;height:24px;line-height:24px;font:400 16.667px 'Liberation Mono', monospace;line-height:24px;color:#000;">}</span>
<span class="t" style="left:601px;top:467.0px;height:24px;line-height:24px;font:italic 400 16.667px 'Liberation Mono', monospace;line-height:24px;color:#8c8c8c;">/*</span>
<svg class="a" style="left:604.0px;top:497.5px;" width="16" height="16" viewBox="0 0 16 16"><rect width="16" height="16" rx="1.500" fill="#12c95f"/><path d="M3.500 8.200l3.200 3.300 5.800-6.500" fill="none" stroke="#fff" stroke-width="2"/></svg>
<div class="a" style="left:636px;top:497.5px;width:16px;height:16px;background:#0b9bea;border-radius:2px;color:#fff;font:700 12px 'Liberation Sans',sans-serif;text-align:center;line-height:16px;">1</div>
<span class="t" style="left:665.5px;top:494.5px;height:24px;line-height:24px;font:italic 400 16.667px 'Liberation Mono', monospace;line-height:24px;color:#8c8c8c;">Setup Phase</span>
<svg class="a" style="left:604.0px;top:607.5px;" width="16" height="16" viewBox="0 0 16 16"><rect width="16" height="16" rx="1.500" fill="#12c95f"/><path d="M3.500 8.200l3.200 3.300 5.800-6.500" fill="none" stroke="#fff" stroke-width="2"/></svg>
<div class="a" style="left:636px;top:607.5px;width:16px;height:16px;background:#0b9bea;border-radius:2px;color:#fff;font:700 12px 'Liberation Sans',sans-serif;text-align:center;line-height:16px;">2</div>
<span class="t" style="left:665.5px;top:604.5px;height:24px;line-height:24px;font:italic 400 16.667px 'Liberation Mono', monospace;line-height:24px;color:#8c8c8c;">Connection Setup</span>
<svg class="a" style="left:604.0px;top:772.5px;" width="16" height="16" viewBox="0 0 16 16"><rect width="16" height="16" rx="1.500" fill="#12c95f"/><path d="M3.500 8.200l3.200 3.300 5.800-6.500" fill="none" stroke="#fff" stroke-width="2"/></svg>
<div class="a" style="left:636px;top:772.5px;width:16px;height:16px;background:#0b9bea;border-radius:2px;color:#fff;font:700 12px 'Liberation Sans',sans-serif;text-align:center;line-height:16px;">3</div>
<span class="t" style="left:665.5px;top:769.5px;height:24px;line-height:24px;font:italic 400 16.667px 'Liberation Mono', monospace;line-height:24px;color:#8c8c8c;">Signaling &amp; Connection</span>
<svg class="a" style="left:604.0px;top:882.5px;" width="16" height="16" viewBox="0 0 16 16"><rect width="16" height="16" rx="1.500" fill="#12c95f"/><path d="M3.500 8.200l3.200 3.300 5.800-6.500" fill="none" stroke="#fff" stroke-width="2"/></svg>
<div class="a" style="left:636px;top:882.5px;width:16px;height:16px;background:#0b9bea;border-radius:2px;color:#fff;font:700 12px 'Liberation Sans',sans-serif;text-align:center;line-height:16px;">4</div>
<span class="t" style="left:665.5px;top:879.5px;height:24px;line-height:24px;font:italic 400 16.667px 'Liberation Mono', monospace;line-height:24px;color:#8c8c8c;">Data Transfer</span>
<svg class="a" style="left:604.0px;top:965.0px;" width="16" height="16" viewBox="0 0 16 16"><rect width="16" height="16" rx="1.500" fill="#12c95f"/><path d="M3.500 8.200l3.200 3.300 5.800-6.500" fill="none" stroke="#fff" stroke-width="2"/></svg>
<div class="a" style="left:636px;top:965.0px;width:16px;height:16px;background:#0b9bea;border-radius:2px;color:#fff;font:700 12px 'Liberation Sans',sans-serif;text-align:center;line-height:16px;">5</div>
<span class="t" style="left:665.5px;top:962.0px;height:24px;line-height:24px;font:italic 400 16.667px 'Liberation Mono', monospace;line-height:24px;color:#8c8c8c;">Handle Disconnections</span>
<div class="a" style="left:644px;top:531.5px;width:4px;height:4px;background:#8c8c8c;border-radius:50%"></div>
<span class="t" style="left:661px;top:522.0px;height:24px;line-height:24px;font:italic 400 16.667px 'Liberation Mono', monospace;line-height:24px;color:#8c8c8c;">peerConnectionFactory (First)</span>
<div class="a" style="left:644px;top:559.0px;width:4px;height:4px;background:#8c8c8c;border-radius:50%"></div>
<span class="t" style="left:661px;top:549.5px;height:24px;line-height:24px;font:italic 400 16.667px 'Liberation Mono', monospace;line-height:24px;color:#8c8c8c;">signalingServerUrl (Set before initWebSocket)</span>
<div class="a" style="left:644px;top:586.5px;width:4px;height:4px;background:#8c8c8c;border-radius:50%"></div>
<span class="t" style="left:661px;top:577.0px;height:24px;line-height:24px;font:italic 400 16.667px 'Liberation Mono', monospace;line-height:24px;color:#8c8c8c;">initWebSocket() (WebSocket must be ready before connection starts)</span>
<div class="a" style="left:644px;top:641.5px;width:4px;height:4px;background:#8c8c8c;border-radius:50%"></div>
<span class="t" style="left:661px;top:632.0px;height:24px;line-height:24px;font:italic 400 16.667px 'Liberation Mono', monospace;line-height:24px;color:#8c8c8c;">peerConnection (Created AFTER WebSocket)</span>
<div class="a" style="left:644px;top:669.0px;width:4px;height:4px;background:#8c8c8c;border-radius:50%"></div>
<span class="t" style="left:661px;top:659.5px;height:24px;line-height:24px;font:italic 400 16.667px 'Liberation Mono', monospace;line-height:24px;color:#8c8c8c;">dataChannel (Requires peerConnection)</span>
<div class="a" style="left:644px;top:696.5px;width:4px;height:4px;background:#8c8c8c;border-radius:50%"></div>
<span class="t" style="left:661px;top:687.0px;height:24px;line-height:24px;font:italic 400 16.667px 'Liberation Mono', monospace;line-height:24px;color:#8c8c8c;">localAudioTrack (Requires peerConnectionFactory)</span>
<div class="a" style="left:644px;top:724.0px;width:4px;height:4px;background:#8c8c8c;border-radius:50%"></div>
<span class="t" style="left:661px;top:714.5px;height:24px;line-height:24px;font:italic 400 16.667px 'Liberation Mono', monospace;line-height:24px;color:#8c8c8c;">localVideoTrack (Requires peerConnectionFactory)</span>
<div class="a" style="left:644px;top:751.5px;width:4px;height:4px;background:#8c8c8c;border-radius:50%"></div>
<span class="t" style="left:661px;top:742.0px;height:24px;line-height:24px;font:italic 400 16.667px 'Liberation Mono', monospace;line-height:24px;color:#8c8c8c;">peerConnection.addStream(mediaStream);</span>
<div class="a" style="left:644px;top:806.5px;width:4px;height:4px;background:#8c8c8c;border-radius:50%"></div>
<span class="t" style="left:661px;top:797.0px;height:24px;line-height:24px;font:italic 400 16.667px 'Liberation Mono', monospace;line-height:24px;color:#8c8c8c;">Send SDP Offer </span>
<span class="t" style="left:811px;top:795.5px;height:24px;line-height:24px;font:400 16.667px 'Liberation Mono', monospace;line-height:24px;color:#8c8c8c;">→</span>
<span class="t" style="left:821px;top:797.0px;height:24px;line-height:24px;font:italic 400 16.667px 'Liberation Mono', monospace;line-height:24px;color:#8c8c8c;"> peerConnection.setLocalDescription()</span>
<div class="a" style="left:644px;top:834.0px;width:4px;height:4px;background:#8c8c8c;border-radius:50%"></div>
<span class="t" style="left:661px;top:824.5px;height:24px;line-height:24px;font:italic 400 16.667px 'Liberation Mono', monospace;line-height:24px;color:#8c8c8c;">Receive SDP Answer </span>
<span class="t" style="left:851px;top:823.0px;height:24px;line-height:24px;font:400 16.667px 'Liberation Mono', monospace;line-height:24px;color:#8c8c8c;">→</span>
<span class="t" style="left:861px;top:824.5px;height:24px;line-height:24px;font:italic 400 16.667px 'Liberation Mono', monospace;line-height:24px;color:#8c8c8c;"> peerConnection.setRemoteDescription()</span>
<div class="a" style="left:644px;top:861.5px;width:4px;height:4px;background:#8c8c8c;border-radius:50%"></div>
<span class="t" style="left:661px;top:852.0px;height:24px;line-height:24px;font:italic 400 16.667px 'Liberation Mono', monospace;line-height:24px;color:#8c8c8c;">ICE Candidate Exchange </span>
<span class="t" style="left:891px;top:850.5px;height:24px;line-height:24px;font:400 16.667px 'Liberation Mono', monospace;line-height:24px;color:#8c8c8c;">→</span>
<span class="t" style="left:901px;top:852.0px;height:24px;line-height:24px;font:italic 400 16.667px 'Liberation Mono', monospace;line-height:24px;color:#8c8c8c;"> peerConnection.addIceCandidate()</span>
<div class="a" style="left:644px;top:916.5px;width:4px;height:4px;background:#8c8c8c;border-radius:50%"></div>
<span class="t" style="left:661px;top:907.0px;height:24px;line-height:24px;font:italic 400 16.667px 'Liberation Mono', monospace;line-height:24px;color:#8c8c8c;">Wait for dataChannel.state == OPEN</span>
<div class="a" style="left:644px;top:944.0px;width:4px;height:4px;background:#8c8c8c;border-radius:50%"></div>
<span class="t" style="left:661px;top:934.5px;height:24px;line-height:24px;font:italic 400 16.667px 'Liberation Mono', monospace;line-height:24px;color:#8c8c8c;">Send &amp; Receive Messages</span>
<div class="a" style="left:644px;top:999.0px;width:4px;height:4px;background:#8c8c8c;border-radius:50%"></div>
<span class="t" style="left:661px;top:989.5px;height:24px;line-height:24px;font:italic 400 16.667px 'Liberation Mono', monospace;line-height:24px;color:#8c8c8c;">WebSocket Reconnect</span>
<div class="a" style="left:644px;top:1026.5px;width:4px;height:4px;background:#8c8c8c;border-radius:50%"></div>
<span class="t" style="left:661px;top:1017.0px;height:24px;line-height:24px;font:italic 400 16.667px 'Liberation Mono', monospace;line-height:24px;color:#8c8c8c;">ICE Restart on Disconnection</span>
<span class="t" style="left:611px;top:1044.5px;height:24px;line-height:24px;font:italic 400 16.667px 'Liberation Mono', monospace;line-height:24px;color:#8c8c8c;">*/</span>
<svg class="a" style="left:612.0px;top:135.0px;" width="14" height="18" viewBox="0 0 14 18"><path d="M7 0a6.400 6.400 0 00-4 11.400v1.200h8v-1.200a6.400 6.400 0 00-4-11.400z" fill="#eda200"/><path d="M3 14.500h8" stroke="#7a7a7a" stroke-width="1.200"/><path d="M4 16.800h6" stroke="#b4b4b4" stroke-width="1.600"/></svg>
<svg class="a" style="left:588.0px;top:473.5px;" width="11" height="13" viewBox="0 0 11 13"><path d="M0.500 0.500h10v7l-5 5-5-5z" fill="#fff" stroke="#c9c9c9"/><path d="M3 5h5" stroke="#b0b0b0"/></svg>
<svg class="a" style="left:588.0px;top:1047.5px;" width="11" height="13" viewBox="0 0 11 13"><path d="M0.500 12.500h10v-7l-5-5-5 5z" fill="#fff" stroke="#c9c9c9"/><path d="M3 8h5" stroke="#b0b0b0"/></svg>
<svg class="a" style="left:2058.5px;top:117.0px;" width="15" height="13" viewBox="0 0 15 13"><path d="M7.500 0.500l7 12h-14z" fill="#eebf00"/><path d="M7.500 4.500v4.500M7.500 10v1.600" stroke="#fff" stroke-width="1.500"/></svg>
<span class="t" style="left:2079px;top:112.0px;height:24px;line-height:24px;font:400 16px 'Liberation Sans', sans-serif;line-height:24px;color:#7a7a7a;">1</span>
<svg class="a" style="left:2098.5px;top:119.5px;" width="11" height="7" viewBox="0 0 11 7"><path d="M1 6l4.500-4.500 4.500 4.500" fill="none" stroke="#4a4a4a" stroke-width="1.500"/></svg>
<svg class="a" style="left:2124.0px;top:120.5px;" width="11" height="7" viewBox="0 0 11 7"><path d="M1 1l4.500 4.500 4.500-4.500" fill="none" stroke="#4a4a4a" stroke-width="1.500"/></svg>
<div class="a" style="left:2128px;top:193px;width:17px;height:2px;background:#a78bfa;"></div>
<div class="a" style="left:2128px;top:302px;width:17px;height:2px;background:#e6b800;"></div>
<svg class="a" style="left:1473.5px;top:828.0px;" width="9" height="20" viewBox="0 0 9 20"><path d="M1 1.500c2 0 3.500 0.500 3.500 2v13c0 1.500-1.500 2-3.500 2M8 1.500c-2 0-3.500 0.500-3.500 2M8 18.500c-2 0-3.500-0.500-3.500-2" fill="none" stroke="#222" stroke-width="1.300"/></svg>
<div class="a" style="left:2145px;top:72px;width:1px;height:1157px;background:#d1d1d1;"></div>
<div class="a" style="left:2146px;top:72px;width:388px;height:1157px;background:#f2f2f2;"></div>
<div class="a" style="left:2146px;top:105px;width:388px;height:1px;background:#d1d1d1;"></div>
<span class="t" style="left:2153.4px;top:78.0px;height:24px;line-height:24px;font:400 17px 'Liberation Sans', sans-serif;line-height:24px;color:#000;letter-spacing:0.077px;">Running Devices:</span>
<svg class="a" style="left:2313.0px;top:81.0px;" width="18" height="18" viewBox="0 0 18 18"><rect x="1" y="1" width="9" height="14" rx="1.500" fill="none" stroke="#8a949b" stroke-width="1.600"/><rect x="8" y="9" width="8" height="6" fill="#fff" stroke="#a57bd8" stroke-width="1.300"/><circle cx="13.500" cy="13.500" r="2.800" fill="#59c25b"/></svg>
<div class="a" style="left:2335px;top:77px;width:92px;height:26px;overflow:hidden"><span class="t" style="left:0;top:1px;font:400 17px 'Liberation Sans',sans-serif;height:24px;line-height:24px;letter-spacing:.35px">Pixel 8 Pro API 33</span></div>
<div class="a" style="left:2296px;top:102.5px;width:131px;height:3px;background:#a3adc4;border-radius:1.500px"></div>
<svg class="a" style="left:2436.0px;top:82.5px;" width="16" height="14" viewBox="0 0 16 14"><rect x="0.800" y="0.800" width="14.400" height="12.400" fill="none" stroke="#6e6e6e" stroke-width="1.600"/><rect x="1" y="1" width="14" height="3.500" fill="#6e6e6e"/></svg>
<div class="a" style="left:2464px;top:78px;width:1px;height:24px;background:#d4d4d4;"></div>
<svg class="a" style="left:2475.5px;top:80.5px;" width="18" height="18" viewBox="0 0 18 18"><g transform="translate(9 9)"><circle r="5.900" fill="#6e6e6e"/><rect x="-2.400" y="-8.300" width="4.800" height="5" rx=".8" fill="#6e6e6e" transform="rotate(30)"/><rect x="-2.400" y="-8.300" width="4.800" height="5" rx=".8" fill="#6e6e6e" transform="rotate(90)"/><rect x="-2.400" y="-8.300" width="4.800" height="5" rx=".8" fill="#6e6e6e" transform="rotate(150)"/><rect x="-2.400" y="-8.300" width="4.800" height="5" rx=".8" fill="#6e6e6e" transform="rotate(210)"/><rect x="-2.400" y="-8.300" width="4.800" height="5" rx=".8" fill="#6e6e6e" transform="rotate(270)"/><rect x="-2.400" y="-8.300" width="4.800" height="5" rx=".8" fill="#6e6e6e" transform="rotate(330)"/><circle r="2.800" fill="#f2f2f2"/></g></svg>
<div class="a" style="left:2510.5px;top:89px;width:15px;height:2px;background:#6e6e6e"></div>
<div class="a" style="left:2146px;top:141px;width:388px;height:1px;background:#d9d9d9;"></div>
<svg class="a" style="left:2157.0px;top:116.0px;" width="16" height="16" viewBox="0 0 16 16"><path d="M4.300 3.300a6.300 6.300 0 107.400 0" fill="none" stroke="#6e6e6e" stroke-width="2.300"/><path d="M8 0v7.500" stroke="#6e6e6e" stroke-width="2.300"/></svg>
<svg class="a" style="left:2190.0px;top:116.5px;" width="17" height="15" viewBox="0 0 17 15"><path d="M0.500 5h3.500l4.500-4v13l-4.500-4h-3.500z" fill="#6e6e6e"/><path d="M10.500 4.800a3.500 3.500 0 010 5.400" fill="none" stroke="#6e6e6e" stroke-width="1.800"/><path d="M11.500 1.500a7.200 7.200 0 010 12" fill="none" stroke="#6e6e6e" stroke-width="2"/></svg>
<svg class="a" style="left:2223.0px;top:116.5px;" width="14" height="15" viewBox="0 0 14 15"><path d="M0.500 5h3.500l4.500-4v13l-4.500-4h-3.500z" fill="#6e6e6e"/><path d="M10.500 4.500a4 4 0 010 6" fill="none" stroke="#6e6e6e" stroke-width="1.600"/></svg>
<div class="a" style="left:2250px;top:112px;width:1px;height:25px;background:#d4d4d4;"></div>
<svg class="a" style="left:2260.5px;top:115.0px;" width="19" height="17" viewBox="0 0 19 17"><rect x="1.200" y="2" width="8" height="13.500" rx="1.300" fill="none" stroke="#7a7a7a" stroke-width="2"/><path d="M13.500 2c4.500 3 4 9.500-1 12.500" fill="none" stroke="#3592c4" stroke-width="2.500"/><path d="M11.500 1.500h5M12.500 1v5" fill="none" stroke="#3592c4" stroke-width="2.200"/></svg>
<svg class="a" style="left:2298.0px;top:119.5px;" width="9" height="7" viewBox="0 0 9 7"><path d="M1 0.500l3 3-3 3M5.500 0.500l3 3-3 3" fill="none" stroke="#8a8a8a" stroke-width="1.100"/></svg>
<svg class="a" style="left:2323.0px;top:115.0px;" width="17" height="15" viewBox="0 0 17 15"><path d="M0.800 8V0.800h9" fill="none" stroke="#8a8a8a" stroke-width="1.400"/><path d="M3.500 11V3.500h10.500v4" fill="none" stroke="#8a8a8a" stroke-width="1.400"/><path d="M3.500 11h4" stroke="#8a8a8a" stroke-width="1.400"/><circle cx="11" cy="9.500" r="2.800" fill="none" stroke="#8a8a8a" stroke-width="1.400"/><path d="M13 11.500l3 3" stroke="#8a8a8a" stroke-width="1.600"/></svg>
<div class="a" style="left:2353px;top:112px;width:1px;height:25px;background:#d4d4d4;"></div>
<svg class="a" style="left:2366.0px;top:117.0px;" width="17" height="15" viewBox="0 0 17 15"><path d="M8.500 0.500l8 14h-16z" fill="#f2a541"/><path d="M8.500 5.500v5M8.500 11.500v1.700" stroke="#fff" stroke-width="1.600"/></svg>
<span class="t" style="left:2387.9px;top:113.0px;height:24px;line-height:24px;font:400 17px 'Liberation Sans', sans-serif;line-height:24px;color:#000;letter-spacing:0.184px;">Live Edit disabled</span>
<div class="a" style="left:2146px;top:277.5px;width:384px;height:815.5px;border-radius:47px 47px 49px 49px;background:#9e9e9e;"></div>
<div class="a" style="left:2147.2px;top:278.7px;width:381.6px;height:813.1px;border-radius:46px 46px 48px 48px;background:linear-gradient(90deg,#6a6a6a 0,#3c3c3c 1.500%,#3c3c3c 98.500%,#6a6a6a 100%);"></div>
<div class="a" style="left:2152.5px;top:283.0px;width:371px;height:804.5px;border-radius:41px 41px 43px 43px;background:#030303;"></div>
<div class="a" style="left:2161px;top:291px;width:355px;height:790px;border-radius:32px 32px 36px 36px;overflow:hidden;background:#0f0f1a">
<svg class="a" style="left:0;top:0" width="355" height="790" viewBox="0 0 355 790">
<defs>
<linearGradient id="sky" x1="0" y1="0" x2="0" y2="1"><stop offset="0" stop-color="#a0a0ad"/><stop offset="0.080" stop-color="#c4c4d0"/><stop offset="0.155" stop-color="#dbdbe7"/><stop offset="0.230" stop-color="#e3e3ef"/><stop offset="0.500" stop-color="#e0deec"/><stop offset="1" stop-color="#d8d6e6"/></linearGradient>
<linearGradient id="blu" gradientUnits="userSpaceOnUse" x1="300" y1="70" x2="40" y2="290"><stop offset="0" stop-color="#b9cbf2"/><stop offset="0.450" stop-color="#a2b9ea"/><stop offset="1" stop-color="#7c97d6"/></linearGradient>
<filter id="b1" x="-20%" y="-20%" width="140%" height="140%"><feGaussianBlur stdDeviation="5"/></filter>
<filter id="b2" x="-20%" y="-20%" width="140%" height="140%"><feGaussianBlur stdDeviation="3.500"/></filter>
<filter id="b4" x="-100%" y="-50%" width="300%" height="200%"><feGaussianBlur stdDeviation="2.200"/></filter>
<filter id="b3" x="-50%" y="-50%" width="200%" height="200%"><feGaussianBlur stdDeviation="6"/></filter>
</defs>
<rect width="355" height="320" fill="url(#sky)"/>
<ellipse cx="20" cy="170" rx="120" ry="50" fill="#d6cfe0" opacity=".55" filter="url(#b1)"/>
<path d="M-20 205 L0 192.600 C20 180 38 169 55.800 158.400 C72 149 88 140 103 132.400 C120 124 135 118 150 113.500 C163 109 176 104 185.600 100.600 C193 98 200 98.500 209 98.200 C222 96 233 94.500 244.600 92.300 C260 89 276 86 291.900 82.900 C310 79 328 75.500 346 72.200 L375 66 L375 320 L-20 320 Z" fill="url(#blu)" filter="url(#b1)"/>
<path d="M-20 286 L0 283 C20 281 38 276 55.800 271 C72 266 88 260 103 252.500 C120 244 135 235 150 226.500 C163 219 176 214 185.600 207.600 C192 203 195 199 197.500 193.500 C201 186 204 178 209 169.900 C215 163 223 159 232.900 155.700 C241 153 248 150.500 256.500 148.600 C263 147.300 269 147 275.400 147.400 C281 148 286 152 291.900 152 C300 152 308 148 315.500 143.900 C323 139 329 134 334.400 127.400 C339 121.500 343 115 345 108.500 C347 100 348 87 348.500 78 L352 71 L375 68 L375 800 L-20 800 Z" fill="#0f0f1a" filter="url(#b2)"/>
<ellipse cx="352.500" cy="57" rx="3" ry="13" fill="#5a4428" opacity=".55" filter="url(#b4)"/>
<path d="M150 790 C200 700 260 640 355 560" stroke="#18204a" stroke-width="30" fill="none" opacity=".3" filter="url(#b1)"/>
</svg>
</div>
<div class="a" style="left:2326.5px;top:301px;width:22px;height:22px;background:#050505;border-radius:50%;"></div>
<div class="a" style="left:2333.5px;top:308px;width:8px;height:8px;background:#1a1a2a;border-radius:50%;box-shadow:0 0 0 1px #15151f"></div>
<div class="a" style="left:2336px;top:309.5px;width:2.5px;height:2.5px;background:#6a5a9a;border-radius:50%"></div>
<div class="a" style="left:2161px;top:291px;width:40px;height:22px;overflow:hidden;border-radius:30px 0 0 0"><span class="t" style="left:-5px;top:1px;font:400 12.500px 'Liberation Sans',sans-serif;height:20px;line-height:20px;color:#fff">15:52</span></div>
<svg class="a" style="left:2194.5px;top:296.0px;" width="9" height="11" viewBox="0 0 9 11"><path d="M3 0h6v11h-9v-8z" fill="#fff"/></svg>
<svg class="a" style="left:2458.0px;top:296.5px;" width="12" height="10" viewBox="0 0 12 10"><path d="M6 10l6-7.500a9 9 0 00-12 0z" fill="#fff"/></svg>
<svg class="a" style="left:2472.5px;top:296.5px;" width="10" height="10" viewBox="0 0 10 10"><path d="M10 0v10h-10z" fill="#fff"/><path d="M6.500 4.500v5.500h2v-7.500z" fill="#9a9aa8"/></svg>
<svg class="a" style="left:2487.0px;top:296.0px;" width="7" height="11" viewBox="0 0 7 11"><path d="M2 0h3v1.200h2v9.800h-7v-9.800h2z" fill="#fff"/></svg>
<span class="t" style="left:2192.4px;top:380.0px;height:24px;line-height:24px;font:400 16.5px 'Liberation Sans', sans-serif;line-height:24px;color:#fff;letter-spacing:-0.658px;text-shadow:0 0 2px rgba(0,0,0,.55),0 1px 1px rgba(0,0,0,.4);">Thu, Feb 27</span>
<div class="a" style="left:2190.5px;top:774.5px;width:47px;height:47px;background:#fff;border-radius:50%"></div>
<svg class="a" style="left:2202.0px;top:784.0px;" width="26" height="28" viewBox="0 0 26 28"><path d="M1 1.500l13 12.500-13 12.500c-.6-.3-1-1-1-2v-21c0-1 .4-1.700 1-2z" fill="#4285f4"/><path d="M1 1.500c.8-.4 1.700-.3 2.600.2l15.200 8.400-4.800 3.900z" fill="#34a853"/><path d="M1 26.500c.8.400 1.700.3 2.600-.2l15.200-8.400-4.800-3.900z" fill="#ea4335"/><path d="M18.800 10.100l5.200 2.800c1.300.7 1.300 1.500 0 2.200l-5.200 2.800-4.800-3.900z" fill="#fbbc04"/></svg>
<div class="a" style="left:2272.5px;top:774.5px;width:47px;height:47px;background:#fff;border-radius:50%"></div>
<svg class="a" style="left:2280.0px;top:786.0px;" width="32" height="24" viewBox="0 0 32 24"><path d="M0 22V4l5 3.500v16.500h-3a2 2 0 01-2-2z" fill="#4285f4"/><path d="M32 22V4l-5 3.500v16.500h3a2 2 0 002-2z" fill="#34a853"/><path d="M5 7.500V1.500l11 8.200 11-8.200v6l-11 8.300z" fill="#ea4335"/><path d="M0 4c0-3.500 3-4 5-2.500v6z" fill="#c5221f"/><path d="M32 4c0-3.500-3-4-5-2.500v6z" fill="#fbbc04"/></svg>
<div class="a" style="left:2355.5px;top:774.5px;width:47px;height:47px;background:#fff;border-radius:50%"></div>
<svg class="a" style="left:2362.0px;top:781.0px;" width="34" height="34" viewBox="0 0 34 34"><path d="M17 17V0.500a8.200 8.200 0 010 16.500z" fill="#ea4335"/><path d="M17 17h16.500a8.200 8.200 0 01-16.500 0z" fill="#4285f4"/><path d="M17 17v16.500a8.200 8.200 0 010-16.500z" fill="#34a853"/><path d="M17 17H0.500a8.200 8.200 0 0116.500 0z" fill="#fbbc04"/></svg>
<div class="a" style="left:2437.5px;top:774.5px;width:47px;height:47px;background:#fff;border-radius:50%"></div>
<svg class="a" style="left:2444.0px;top:786.0px;" width="34" height="24" viewBox="0 0 34 24"><rect width="34" height="24" rx="6.500" fill="#ff0033"/><path d="M13.500 6.500l9 5.500-9 5.500z" fill="#fff"/></svg>
<span class="t" style="left:2188.4px;top:826.5px;height:24px;line-height:24px;font:400 11.5px 'Liberation Sans', sans-serif;line-height:24px;color:#fff;letter-spacing:-0.185px;">Play Store</span>
<span class="t" style="left:2280.9px;top:826.5px;height:24px;line-height:24px;font:400 11.5px 'Liberation Sans', sans-serif;line-height:24px;color:#fff;letter-spacing:0.092px;">Gmail</span>
<span class="t" style="left:2360.9px;top:826.5px;height:24px;line-height:24px;font:400 11.5px 'Liberation Sans', sans-serif;line-height:24px;color:#fff;letter-spacing:0.117px;">Photos</span>
<span class="t" style="left:2438.4px;top:826.5px;height:24px;line-height:24px;font:400 11.5px 'Liberation Sans', sans-serif;line-height:24px;color:#fff;letter-spacing:0.033px;">YouTube</span>
<div class="a" style="left:2190.5px;top:926.5px;width:47px;height:47px;background:#1a73e8;border-radius:50%"></div>
<svg class="a" style="left:2200.0px;top:936.0px;" width="28" height="28" viewBox="0 0 28 28"><path d="M6.500 3.500l4 .3 1.800 5-2.300 2.500c1.300 2.800 3.500 5 6.500 6.500l2.500-2.300 5 1.800.3 4c-1 2.500-3.300 3.300-5.500 3C9.500 23 4 16.500 3 9c-.3-2.500 1-4.700 3.500-5.500z" fill="#fff"/><path d="M14 20c2 2 6 4 9.500 3.500" stroke="#d2e3fc" stroke-width="2" fill="none" opacity=".7"/></svg>
<div class="a" style="left:2272.5px;top:926.5px;width:47px;height:47px;background:#fff;border-radius:50%"></div>
<svg class="a" style="left:2280.0px;top:937.0px;" width="34" height="30" viewBox="0 0 34 30"><path d="M8 3h16a9 9 0 010 18h-6l-7 6v-6.500a9 9 0 01-3-17.500z" fill="#7baaf7"/><rect x="2" y="1" width="26" height="15.500" rx="7.700" fill="#0b57d0"/></svg>
<svg class="a" style="left:2355.5px;top:926.5px;" width="47" height="47" viewBox="0 0 47 47"><circle cx="23.500" cy="23.500" r="23.500" fill="#fff"/><path d="M23.500 23.500L3.150 11.750A23.500 23.500 0 0143.850 11.750z" fill="#ea4335"/><path d="M23.500 23.500L43.850 11.750A23.500 23.500 0 0123.500 47z" fill="#fbbc04"/><path d="M23.500 23.500L23.500 47A23.500 23.500 0 013.150 11.750z" fill="#34a853"/><path d="M23.500 12h20.300" stroke="#ea4335" stroke-width="0"/><circle cx="23.500" cy="23.500" r="11.500" fill="#fff"/><circle cx="23.500" cy="23.500" r="9" fill="#1a73e8"/></svg>
<div class="a" style="left:2188px;top:1002px;width:300px;height:40px;background:#fff;border-radius:20px"></div>
<svg class="a" style="left:2200.5px;top:1012.0px;" width="20" height="20" viewBox="0 0 20 20"><path d="M19.600 10.200c0-.7-.1-1.400-.2-2H10v3.800h5.400a4.600 4.600 0 01-2 3v2.500h3.200c1.900-1.700 3-4.300 3-7.300z" fill="#4285f4"/><path d="M10 20c2.700 0 5-.9 6.600-2.400l-3.200-2.500c-.9.600-2 1-3.400 1-2.600 0-4.800-1.800-5.600-4.100H1.100v2.600A10 10 0 0010 20z" fill="#34a853"/><path d="M4.400 11.900a6 6 0 010-3.800V5.500H1.100a10 10 0 000 9z" fill="#fbbc04"/><path d="M10 4c1.500 0 2.800.5 3.800 1.500l2.900-2.900A10 10 0 001.100 5.500l3.300 2.600C5.200 5.700 7.400 4 10 4z" fill="#ea4335"/></svg>
<svg class="a" style="left:2420.0px;top:1011.5px;" width="14" height="22" viewBox="0 0 14 22"><rect x="4" y="0.500" width="6" height="12" rx="3" fill="#4285f4"/><path d="M1 9.500a6 6 0 0012 0" fill="none" stroke="#ea4335" stroke-width="1.700"/><path d="M7 15.500v5.500" stroke="#34a853" stroke-width="1.700"/><path d="M1 9.500a6 6 0 002 4.500" fill="none" stroke="#fbbc04" stroke-width="1.700"/></svg>
<svg class="a" style="left:2454.0px;top:1013.0px;" width="22" height="19" viewBox="0 0 22 19"><path d="M1 8V5.500a2 2 0 012-2h3l1.500-2.500h7l1.500 2.500h1" fill="none" stroke="#4285f4" stroke-width="2"/><path d="M17 3.500h2a2 2 0 012 2v5" fill="none" stroke="#ea4335" stroke-width="2"/><path d="M1 8v8a2 2 0 002 2h5" fill="none" stroke="#fbbc04" stroke-width="2"/><path d="M8 18h11a2 2 0 002-2v-5.500" fill="none" stroke="#34a853" stroke-width="2"/><circle cx="11" cy="11" r="3.200" fill="#4285f4"/></svg>
<div class="a" style="left:2295.5px;top:1068.5px;width:85.5px;height:3px;background:#fff;border-radius:1.500px"></div>
<div class="a" style="left:2478px;top:1068px;width:34px;height:134px;background:#fff;border:1px solid #d6d6d6;border-radius:5px"></div>
<svg class="a" style="left:2488.0px;top:1079.0px;" width="14" height="14" viewBox="0 0 14 14"><path d="M7 0.500v13M0.500 7h13" stroke="#6e6e6e" stroke-width="1.600"/></svg>
<div class="a" style="left:2489px;top:1118px;width:12px;height:1.5px;background:#c4c4c4;"></div>
<span class="t" style="left:2485.4px;top:1139.5px;height:24px;line-height:24px;font:700 13px 'Liberation Sans', sans-serif;line-height:24px;color:#6e6e6e;letter-spacing:0.302px;">1:1</span>
<svg class="a" style="left:2486.5px;top:1177.0px;" width="17" height="14" viewBox="0 0 17 14"><rect x="0.700" y="0.700" width="15.600" height="12.600" fill="none" stroke="#c4c4c4" stroke-width="1.400"/><path d="M3.500 6.500v-3h3M13.500 7.500v3h-3" fill="none" stroke="#c4c4c4" stroke-width="1.300"/></svg>
<div class="a" style="left:2535px;top:72px;width:25px;height:1255px;background:#f2f2f2;"></div>
<div class="a" style="left:2534px;top:72px;width:1px;height:1255px;background:#d4d4d4;"></div>
<div class="a" style="left:2535px;top:1168px;width:25px;height:159px;background:#bfbfbf;"></div>
<svg class="a" style="left:2540.0px;top:85.0px;" width="14" height="14" viewBox="0 0 14 14"><path d="M7 0c.6 4 3 6.400 7 7-4 .6-6.400 3-7 7-.6-4-3-6.400-7-7 4-.6 6.400-3 7-7z" fill="#5e5e5e"/></svg>
<span class="v" style="left:2559px;top:104px;transform:rotate(90deg);color:#000;font-size:15px;letter-spacing:-0.503px;">Gemini</span>
<svg class="a" style="left:2539.5px;top:177.0px;" width="15" height="16" viewBox="0 0 15 16"><rect x="1" y="1" width="8" height="12" rx="1" fill="none" stroke="#6e6e6e" stroke-width="1.600"/><path d="M6 16a4.500 4.500 0 019 0z" fill="#6e6e6e"/><path d="M8 10l1.500 2M13 10l-1.500 2" stroke="#6e6e6e" stroke-width="1"/></svg>
<span class="v" style="left:2559px;top:199px;transform:rotate(90deg);color:#000;font-size:15px;letter-spacing:-0.248px;">Device Manager</span>
<svg class="a" style="left:2539.5px;top:340.0px;" width="15" height="10" viewBox="0 0 15 10"><path d="M6 1.200H4.500a3.800 3.800 0 000 7.600H6M9 1.200h1.500a3.800 3.800 0 010 7.600H9M4.500 5h6" fill="none" stroke="#6e6e6e" stroke-width="1.500"/></svg>
<span class="v" style="left:2559px;top:359px;transform:rotate(90deg);color:#000;font-size:15px;letter-spacing:-0.282px;">App Links Assistant</span>
<svg class="a" style="left:2538.5px;top:513.5px;" width="17" height="13" viewBox="0 0 17 13"><path d="M1 12c0-5 3-8.500 7-8.500 2 0 3.200.8 4 1.800.6-1.600 1.400-3.400 3.300-3.200 1.700.2 1.900 2.200.6 2.600-.8.300-1.400-.3-1.200-1-.8.400-1 1.600-1.300 3 1 2 .8 4 .6 5h-2.300c0-1-.2-2-1-2-.8 0-1 1-1 2h-2.700c0-1-.2-2-1-2s-1 1-1 2z" fill="#6e6e6e"/></svg>
<span class="v" style="left:2559px;top:534px;transform:rotate(90deg);color:#000;font-size:15px;letter-spacing:-0.606px;">Gradle</span>
<svg class="a" style="left:2539.5px;top:601.0px;" width="15" height="16" viewBox="0 0 15 16"><path d="M1.500 12.500c1.500-1.500 1.500-3 1.500-5.500a4.500 4.500 0 019 0c0 2.500 0 4 1.500 5.500z" fill="#8a8a8a"/><circle cx="7.500" cy="14.500" r="1.500" fill="#8a8a8a"/><circle cx="12.500" cy="2.500" r="2.500" fill="#3592c4"/></svg>
<span class="v" style="left:2559px;top:624px;transform:rotate(90deg);color:#000;font-size:15px;letter-spacing:-0.142px;">Notifications</span>
<svg class="a" style="left:2540.5px;top:733.5px;" width="13" height="13" viewBox="0 0 13 13"><path d="M1 0.500v12" stroke="#6e6e6e" stroke-width="1.800"/><path d="M5 1.500h8M5 6.500h8M5 11.500h8" stroke="#6e6e6e" stroke-width="1.800"/></svg>
<span class="v" style="left:2559px;top:754px;transform:rotate(90deg);color:#000;font-size:15px;letter-spacing:-0.460px;">EasyCode</span>
<svg class="a" style="left:2541.0px;top:920.0px;" width="12" height="14" viewBox="0 0 12 14"><path d="M6 0.500l5.500 2v4.500c0 3.500-2.500 5.500-5.500 6.500-3-1-5.500-3-5.500-6.500v-4.500z" fill="none" stroke="#6e6e6e" stroke-width="1.300"/><path d="M6 0.500l5.500 2v4.500c0 3.500-2.500 5.500-5.500 6.500z" fill="#6e6e6e"/></svg>
<span class="v" style="left:2559px;top:941px;transform:rotate(90deg);color:#000;font-size:15px;letter-spacing:-0.578px;">Coverage</span>
<svg class="a" style="left:2541.5px;top:1029.5px;" width="11" height="15" viewBox="0 0 11 15"><rect x="1" y="1" width="9" height="13" rx="1.200" fill="none" stroke="#6e6e6e" stroke-width="1.500"/><path d="M3 12h5" stroke="#6e6e6e" stroke-width="1.200"/></svg>
<span class="v" style="left:2559px;top:1051px;transform:rotate(90deg);color:#000;font-size:15px;letter-spacing:-0.348px;">Device Explorer</span>
<svg class="a" style="left:2539.5px;top:1182.0px;" width="15" height="16" viewBox="0 0 15 16"><rect x="1" y="1" width="8" height="12" rx="1" fill="none" stroke="#6e6e6e" stroke-width="1.600"/><rect x="6" y="8" width="7" height="5" fill="#bdbdbd" stroke="#6e6e6e" stroke-width="1.200"/><circle cx="12.500" cy="13.500" r="2.500" fill="#22c322"/></svg>
<span class="v" style="left:2559px;top:1205px;transform:rotate(90deg);color:#000;font-size:15px;letter-spacing:-0.458px;">Running Devices</span>
<div class="a" style="left:26px;top:1229px;width:2508px;height:1px;background:#d1d1d1;"></div>
<div class="a" style="left:26px;top:1230px;width:2508px;height:97px;background:#f2f2f2;"></div>
<span class="t" style="left:33.4px;top:1236.0px;height:24px;line-height:24px;font:400 17px 'Liberation Sans', sans-serif;line-height:24px;color:#000;letter-spacing:0.439px;">Logcat:</span>
<span class="t" style="left:114.4px;top:1236.0px;height:24px;line-height:24px;font:400 17px 'Liberation Sans', sans-serif;line-height:24px;color:#000;letter-spacing:0.471px;">Logcat</span>
<svg class="a" style="left:176.0px;top:1243.0px;" width="10" height="10" viewBox="0 0 10 10"><path d="M1 1l8 8M9 1l-8 8" stroke="#b0b0b0" stroke-width="1.2"/></svg>
<span class="t" style="left:214.9px;top:1236.0px;height:24px;line-height:24px;font:400 17px 'Liberation Sans', sans-serif;line-height:24px;color:#000;letter-spacing:-0.154px;">com.voipplus.mmsclient (Pixel_8_Pro_API_33)</span>
<svg class="a" style="left:571.0px;top:1243.0px;" width="10" height="10" viewBox="0 0 10 10"><path d="M1 1l8 8M9 1l-8 8" stroke="#b0b0b0" stroke-width="1.2"/></svg>
<svg class="a" style="left:604.0px;top:1239.0px;" width="14" height="14" viewBox="0 0 14 14"><path d="M7 0.500v13M0.500 7h13" stroke="#6e6e6e" stroke-width="2"/></svg>
<div class="a" style="left:26px;top:1263px;width:2508px;height:1px;background:#d6d6d6;"></div>
<div class="a" style="left:200px;top:1260px;width:395px;height:3.7px;background:#a3adc4;border-radius:2px"></div>
<svg class="a" style="left:2475.5px;top:1238.5px;" width="18" height="18" viewBox="0 0 18 18"><g transform="translate(9 9)"><circle r="5.900" fill="#6e6e6e"/><rect x="-2.400" y="-8.300" width="4.800" height="5" rx=".8" fill="#6e6e6e" transform="rotate(30)"/><rect x="-2.400" y="-8.300" width="4.800" height="5" rx=".8" fill="#6e6e6e" transform="rotate(90)"/><rect x="-2.400" y="-8.300" width="4.800" height="5" rx=".8" fill="#6e6e6e" transform="rotate(150)"/><rect x="-2.400" y="-8.300" width="4.800" height="5" rx=".8" fill="#6e6e6e" transform="rotate(210)"/><rect x="-2.400" y="-8.300" width="4.800" height="5" rx=".8" fill="#6e6e6e" transform="rotate(270)"/><rect x="-2.400" y="-8.300" width="4.800" height="5" rx=".8" fill="#6e6e6e" transform="rotate(330)"/><circle r="2.800" fill="#f2f2f2"/></g></svg>
<div class="a" style="left:2510.5px;top:1247px;width:15px;height:2px;background:#6e6e6e"></div>
<div class="a" style="left:38px;top:1275px;width:492px;height:33.5px;background:#fff;border:1px solid #c4c4c4;border-radius:4px"></div>
<svg class="a" style="left:57.0px;top:1284.0px;" width="18" height="18" viewBox="0 0 18 18"><rect x="1" y="1" width="9" height="14" rx="1.500" fill="none" stroke="#8a949b" stroke-width="1.600"/><rect x="8" y="9" width="8" height="6" fill="#fff" stroke="#a57bd8" stroke-width="1.300"/></svg>
<span class="t" style="left:77.4px;top:1281.0px;height:24px;line-height:24px;font:400 17px 'Liberation Sans', sans-serif;line-height:24px;color:#000;letter-spacing:0.173px;">Pixel 8 Pro API 33 (emulator-5554)</span>
<span class="t" style="left:350.4px;top:1281.0px;height:24px;line-height:24px;font:400 17px 'Liberation Sans', sans-serif;line-height:24px;color:#8c8c8c;letter-spacing:0.183px;">Android 13, API 33</span>
<svg class="a" style="left:510.0px;top:1289.5px;" width="11" height="7" viewBox="0 0 11 7"><path d="M0 0h11l-5.500 7z" fill="#6e6e6e"/></svg>
<div class="a" style="left:545px;top:1275px;width:1950px;height:33.5px;background:#fff;border:1px solid #c4c4c4;border-radius:2px"></div>
<div class="a" style="left:546px;top:1276px;width:31px;height:31.5px;background:#f2f2f2;"></div>
<svg class="a" style="left:553.0px;top:1284.0px;" width="15" height="14" viewBox="0 0 15 14"><path d="M0.500 0.500h14l-5.300 6.300v6.700l-3.400-1.800v-4.900z" fill="#6e6e6e"/></svg>
<svg class="a" style="left:568.0px;top:1290.5px;" width="5" height="3" viewBox="0 0 5 3"><path d="M0 0h5l-2.500 3z" fill="#6e6e6e"/></svg>
<span class="t" style="left:579.9px;top:1279.0px;height:24px;line-height:24px;font:400 17px 'Liberation Sans', sans-serif;line-height:24px;color:#000;letter-spacing:0.029px;">Webr</span>
<div class="a" style="left:2400px;top:1276px;width:94px;height:31.5px;background:#f2f2f2;"></div>
<svg class="a" style="left:2412.0px;top:1287.0px;" width="10" height="10" viewBox="0 0 10 10"><path d="M1 1l8 8M9 1l-8 8" stroke="#b9b9b9" stroke-width="1.2"/></svg>
<span class="t" style="left:2434.4px;top:1280.5px;height:24px;line-height:24px;font:700 16px 'Liberation Sans', sans-serif;line-height:24px;color:#c0c4c8;letter-spacing:0.947px;">Cc</span>
<div class="a" style="left:2460px;top:1280px;width:1px;height:24px;background:#d4d4d4;"></div>
<svg class="a" style="left:2467.5px;top:1284.0px;" width="16" height="15" viewBox="0 0 16 15"><path d="M8 1.200l2 4.500 4.800.5-3.600 3.300 1 4.800-4.200-2.500-4.200 2.500 1-4.800L1.200 6.200l4.800-.5z" fill="none" stroke="#b9b9b9" stroke-width="1.200"/></svg>
<svg class="a" style="left:2507.0px;top:1283.0px;" width="18" height="18" viewBox="0 0 18 18"><circle cx="9" cy="9" r="8" fill="none" stroke="#c3cdd6" stroke-width="1.300"/><text x="5.500" y="13.500" font-family="Liberation Sans, sans-serif" font-size="12" fill="#b3bdc6">?</text></svg>
<div class="a" style="left:61px;top:1320px;width:2473px;height:7px;background:#fff;"></div>
<div class="a" style="left:26px;top:1320px;width:2508px;height:1px;background:#dadada;"></div>
<div class="a" style="left:76px;top:1321px;width:284px;height:6px;background:#e3e3e3;"></div>
<div class="a" style="left:1040px;top:1322px;width:22px;height:4px;background:#d6e4fb;"></div>
<div class="a" style="left:1114px;top:1324px;width:8px;height:2px;background:#c9d6ea;"></div>
<div class="a" style="left:0px;top:1327px;width:2560px;height:1px;background:#d4d4d4;"></div>
<div class="a" style="left:0px;top:1328px;width:2560px;height:26px;background:#f2f2f2;"></div>
<div class="a" style="left:248px;top:1329px;width:91px;height:25px;background:#c2c2c2;"></div>
<svg class="a" style="left:39.5px;top:1334.5px;" width="11" height="14" viewBox="0 0 11 14"><circle cx="2.500" cy="2.500" r="1.800" fill="#6e6e6e"/><circle cx="2.500" cy="11.500" r="1.800" fill="#6e6e6e"/><circle cx="8.500" cy="3.500" r="1.800" fill="#6e6e6e"/><path d="M2.500 2.500v9M8.500 3.500c0 4-6 3-6 6" fill="none" stroke="#6e6e6e" stroke-width="1.400"/></svg>
<span class="t" style="left:58.4px;top:1329.5px;height:24px;line-height:24px;font:400 14.5px 'Liberation Sans', sans-serif;line-height:24px;color:#000;letter-spacing:0.434px;">Git</span>
<svg class="a" style="left:100.5px;top:1335.5px;" width="11" height="12" viewBox="0 0 11 12"><path d="M0.500 0.500l10 5.500-10 5.500z" fill="#6e6e6e"/></svg>
<span class="t" style="left:119.4px;top:1329.5px;height:24px;line-height:24px;font:400 14.5px 'Liberation Sans', sans-serif;line-height:24px;color:#000;letter-spacing:-0.105px;">Run</span>
<svg class="a" style="left:167.0px;top:1336.5px;" width="16" height="11" viewBox="0 0 16 11"><path d="M1.500 10.500a6.500 6.500 0 0110.500-5" fill="none" stroke="#6e6e6e" stroke-width="2"/><path d="M13.500 6.500a6.500 6.500 0 011 4" fill="none" stroke="#6e6e6e" stroke-width="2"/><path d="M6 11a2.500 2.500 0 013.500-2.500l4-3.500-2.500 4.500a2.500 2.500 0 010 1.500z" fill="#6e6e6e"/></svg>
<span class="t" style="left:188.4px;top:1329.5px;height:24px;line-height:24px;font:400 14.5px 'Liberation Sans', sans-serif;line-height:24px;color:#000;letter-spacing:0.209px;">Profiler</span>
<svg class="a" style="left:261.5px;top:1337.0px;" width="14" height="10" viewBox="0 0 14 10"><path d="M0 1h14M0 5h9M0 9h11" stroke="#6e6e6e" stroke-width="1.800"/></svg>
<span class="t" style="left:282.4px;top:1329.5px;height:24px;line-height:24px;font:400 14.5px 'Liberation Sans', sans-serif;line-height:24px;color:#000;letter-spacing:0.571px;">Logcat</span>
<svg class="a" style="left:356.0px;top:1334.5px;" width="16" height="14" viewBox="0 0 16 14"><path d="M4 0.700h8l3.300 4.300-7.300 8.500-7.300-8.500z" fill="none" stroke="#6e6e6e" stroke-width="1.200"/><path d="M0.700 5h14.600M5.500 5l2.500 8 2.500-8M4 0.700l1.500 4.300 2.500-4.300 2.500 4.300 1.500-4.300" fill="none" stroke="#6e6e6e" stroke-width="1"/></svg>
<span class="t" style="left:377.4px;top:1329.5px;height:24px;line-height:24px;font:400 14.5px 'Liberation Sans', sans-serif;line-height:24px;color:#000;letter-spacing:0.023px;">App Quality Insights</span>
<svg class="a" style="left:532.5px;top:1334.5px;" width="15" height="14" viewBox="0 0 15 14"><path d="M0.500 5l5-4.500 3 1 1 2-2 2-1.800-.8-1.500 1.300z" fill="#6e6e6e"/><path d="M6.500 6.500l1.800-1.500 6.200 7-1.800 1.700z" fill="#6e6e6e"/></svg>
<span class="t" style="left:553.4px;top:1329.5px;height:24px;line-height:24px;font:400 14.5px 'Liberation Sans', sans-serif;line-height:24px;color:#000;letter-spacing:0.037px;">Build</span>
<svg class="a" style="left:612.0px;top:1337.0px;" width="13" height="10" viewBox="0 0 13 10"><path d="M0 1h2M4 1h9M0 5h2M4 5h9M0 9h2M4 9h9" stroke="#6e6e6e" stroke-width="1.800"/></svg>
<span class="t" style="left:630.4px;top:1329.5px;height:24px;line-height:24px;font:400 14.5px 'Liberation Sans', sans-serif;line-height:24px;color:#000;letter-spacing:-0.408px;">TODO</span>
<svg class="a" style="left:696.5px;top:1335.0px;" width="13" height="13" viewBox="0 0 13 13"><circle cx="6.500" cy="6.500" r="6.300" fill="#6e6e6e"/><path d="M6.500 3v4.500M6.500 8.800v1.600" stroke="#f2f2f2" stroke-width="1.600"/></svg>
<span class="t" style="left:715.4px;top:1329.5px;height:24px;line-height:24px;font:400 14.5px 'Liberation Sans', sans-serif;line-height:24px;color:#000;letter-spacing:0.164px;">Problems</span>
<svg class="a" style="left:803.5px;top:1335.0px;" width="15" height="13" viewBox="0 0 15 13"><rect width="15" height="13" fill="#6e6e6e"/><path d="M3 3.500l3 2.500-3 2.500M7.500 9.500h4.500" fill="none" stroke="#f2f2f2" stroke-width="1.300"/></svg>
<span class="t" style="left:824.4px;top:1329.5px;height:24px;line-height:24px;font:400 14.5px 'Liberation Sans', sans-serif;line-height:24px;color:#000;letter-spacing:0.372px;">Terminal</span>
<svg class="a" style="left:907.0px;top:1334.5px;" width="15" height="14" viewBox="0 0 15 14"><path d="M4 0.500h7l3.500 6.500-3.500 6.500h-7l-3.500-6.500z" fill="#6e6e6e"/><path d="M6 4l5 3-5 3z" fill="#f2f2f2"/></svg>
<span class="t" style="left:928.4px;top:1329.5px;height:24px;line-height:24px;font:400 14.5px 'Liberation Sans', sans-serif;line-height:24px;color:#000;letter-spacing:0.256px;">Services</span>
<svg class="a" style="left:1013.0px;top:1334.0px;" width="14" height="16" viewBox="0 0 14 16"><ellipse cx="7" cy="7" rx="4.500" ry="5.500" fill="#6e6e6e"/><path d="M0.500 7h13M1.500 3l3 1.500M12.500 3l-3 1.500M1.500 11l3-1.500M12.500 11l-3-1.500" stroke="#6e6e6e" stroke-width="1.300"/><path d="M3 15.500a4 3 0 018 0z" fill="#6e6e6e"/></svg>
<span class="t" style="left:1033.4px;top:1329.5px;height:24px;line-height:24px;font:400 14.5px 'Liberation Sans', sans-serif;line-height:24px;color:#000;letter-spacing:0.113px;">App Inspection</span>
<div class="a" style="left:0px;top:1354px;width:2560px;height:1px;background:#dedede;"></div>
<div class="a" style="left:0px;top:1355px;width:2560px;height:25px;background:#f2f2f2;"></div>
<svg class="a" style="left:15.0px;top:1360.5px;" width="15" height="14" viewBox="0 0 15 14"><rect x="3.700" y="0.700" width="10.600" height="9.600" fill="#f2f2f2" stroke="#6e6e6e" stroke-width="1.300"/><path d="M0.700 3.500v9.800h11" fill="none" stroke="#6e6e6e" stroke-width="1.300"/></svg>
<span class="t" style="left:48.4px;top:1355.5px;height:24px;line-height:24px;font:400 17px 'Liberation Sans', sans-serif;line-height:24px;color:#000;letter-spacing:0.241px;">Gradle build finished in 4 m 33 s 153 ms (8 minutes ago)</span>
<svg class="a" style="left:2130.5px;top:1360.5px;" width="15" height="15" viewBox="0 0 15 15"><path d="M7.500 0c.6 4.300 3.200 6.900 7.500 7.500-4.300.6-6.900 3.200-7.500 7.500-.6-4.300-3.200-6.900-7.500-7.500 4.300-.6 6.900-3.200 7.500-7.500z" fill="#5a5d6b"/></svg>
<span class="t" style="left:2159.4px;top:1355.5px;height:24px;line-height:24px;font:400 17px 'Liberation Sans', sans-serif;line-height:24px;color:#000;letter-spacing:0.102px;">3:13</span>
<span class="t" style="left:2207.4px;top:1355.5px;height:24px;line-height:24px;font:400 17px 'Liberation Sans', sans-serif;line-height:24px;color:#000;letter-spacing:-1.002px;">CRLF</span>
<span class="t" style="left:2263.4px;top:1355.5px;height:24px;line-height:24px;font:400 17px 'Liberation Sans', sans-serif;line-height:24px;color:#000;letter-spacing:0.307px;">UTF-8</span>
<svg class="a" style="left:2327.0px;top:1359.5px;" width="16" height="14" viewBox="0 0 16 14"><path d="M0.500 0.500h15v10.500h-2.500v3l-3.500-3h-9z" fill="#6e6e6e"/><path d="M5 2.500v4.500M5 8.200v1.300M10.500 2.500v4.500M10.500 8.200v1.300" stroke="#f2f2f2" stroke-width="1.500"/></svg>
<span class="t" style="left:2357.4px;top:1355.5px;height:24px;line-height:24px;font:400 17px 'Liberation Sans', sans-serif;line-height:24px;color:#000;letter-spacing:0.336px;">4 spaces</span>
<svg class="a" style="left:2443.5px;top:1359.5px;" width="11" height="16" viewBox="0 0 11 16"><circle cx="2.500" cy="2.500" r="2" fill="#6e6e6e"/><circle cx="2.500" cy="13.500" r="2" fill="#6e6e6e"/><circle cx="8.500" cy="3.500" r="2" fill="#6e6e6e"/><path d="M2.500 2.500v11M8.500 3.500c0 4.500-6 3.500-6 7" fill="none" stroke="#6e6e6e" stroke-width="1.600"/></svg>
<span class="t" style="left:2463.4px;top:1355.5px;height:24px;line-height:24px;font:400 17px 'Liberation Sans', sans-serif;line-height:24px;color:#000;letter-spacing:0.486px;">master</span>
<svg class="a" style="left:2528.5px;top:1360.0px;" width="15" height="14" viewBox="0 0 15 14"><path d="M1.500 7V4a3 3 0 016 0" fill="none" stroke="#6e6e6e" stroke-width="1.500"/><rect x="5" y="7" width="9.500" height="6.500" fill="#6e6e6e"/></svg>
<div class="a" style="left:0px;top:1381px;width:2560px;height:59px;background:linear-gradient(180deg,#dedede,#d9d9d9);"></div>
<div class="a" style="left:0px;top:1380px;width:2560px;height:1px;background:#c9c9c9;"></div>
<div class="a" style="left:1228px;top:1386px;width:48px;height:48px;background:#f4f4f4;border-radius:5px;border:1px solid #e6e6e6"></div>
<svg class="a" style="left:25.5px;top:1395.5px;" width="29" height="29" viewBox="0 0 29 29"><defs><linearGradient id="wg" x1="0" y1="0" x2="1" y2="1"><stop offset="0" stop-color="#4cc2ff"/><stop offset="1" stop-color="#0f7fe0"/></linearGradient></defs><rect x="0" y="0" width="13.500" height="13.500" fill="url(#wg)"/><rect x="15" y="0" width="13.500" height="13.500" fill="url(#wg)"/><rect x="0" y="15" width="13.500" height="13.500" fill="url(#wg)"/><rect x="15" y="15" width="13.500" height="13.500" fill="url(#wg)"/></svg>
<svg class="a" style="left:81.5px;top:1396.5px;" width="29" height="27" viewBox="0 0 29 27"><rect x="8" y="0" width="21" height="19" rx="2" fill="#f4f4f4" opacity=".9"/><rect x="0" y="8" width="21" height="19" rx="2" fill="#1f1f1f"/><rect x="8" y="8" width="13" height="11" fill="#bdbdbd"/></svg>
<svg class="a" style="left:136.5px;top:1395.5px;" width="31" height="28" viewBox="0 0 31 28"><path d="M1 3a2 2 0 012-2h8l3 3h14a2 2 0 012 2v19a2 2 0 01-2 2H3a2 2 0 01-2-2z" fill="#f0b02e"/><path d="M1 9h29v16a2 2 0 01-2 2H3a2 2 0 01-2-2z" fill="#ffd45e"/><rect x="9" y="19" width="13" height="8" rx="1.500" fill="#1a7fd6"/><rect x="12" y="22" width="7" height="2" rx="1" fill="#0a4f96"/></svg>
<div class="a" style="left:148.5px;top:1431px;width:7px;height:3px;background:#8a8a8a;border-radius:1.500px"></div>
<svg class="a" style="left:191.0px;top:1395.0px;" width="30" height="30" viewBox="0 0 30 30"><circle cx="15" cy="15" r="14" fill="#d9d9d9" stroke="#8a8a8a" stroke-width="1.500"/><circle cx="15" cy="15" r="11" fill="#f4f1ea" stroke="#b5b5b5"/><path d="M11 7l8 15" stroke="#d23a2a" stroke-width="2.500"/><path d="M19 8l3 8" stroke="#e89a7a" stroke-width="1.500"/></svg>
<svg class="a" style="left:246.0px;top:1396.5px;" width="28" height="27" viewBox="0 0 28 27"><rect x="0" y="0" width="25" height="24" rx="2" fill="#1e86e0"/><circle cx="13" cy="11" r="7" fill="#7cc4f7" stroke="#e8f4ff" stroke-width="1.500"/><path d="M18 16l8 8" stroke="#2a8be6" stroke-width="4"/></svg>
<svg class="a" style="left:301.0px;top:1395.0px;" width="30" height="30" viewBox="0 0 30 30"><defs><radialGradient id="ff" cx=".6" cy=".2" r=".9"><stop offset="0" stop-color="#ffe14d"/><stop offset=".45" stop-color="#ff8a1f"/><stop offset="1" stop-color="#e8224f"/></radialGradient></defs><circle cx="15" cy="16" r="13.500" fill="url(#ff)"/><path d="M17 2c3 3 3 6 1 8 5-1 8 1 9 5-1-5-4-11-10-13z" fill="#ffc22e"/><circle cx="15" cy="15.500" r="6" fill="#7b3fd6"/><path d="M9 13c2-2 6-3 9 0-3 0-4 2-7 2z" fill="#ffb13b"/></svg>
<div class="a" style="left:312.5px;top:1431px;width:7px;height:3px;background:#8a8a8a;border-radius:1.500px"></div>
<svg class="a" style="left:356.0px;top:1395.0px;" width="30" height="30" viewBox="0 0 30 30"><path d="M22 1l7 3v22l-7 3-14-11-5 4-3-1.500V8.500L3 7l5 4z" fill="#8b5bd6"/><path d="M22 9v12l-8-6z" fill="#d9d9d9"/><path d="M22 1l7 3v22l-7 3z" fill="#b48cf0"/><path d="M3 11l4 4-4 4z" fill="#d9d9d9"/></svg>
<div class="a" style="left:367.5px;top:1431px;width:7px;height:3px;background:#8a8a8a;border-radius:1.500px"></div>
<svg class="a" style="left:411.0px;top:1396.0px;" width="30" height="28" viewBox="0 0 30 28"><path d="M1 17c5-8 23-8 28 0-5 8-23 8-28 0z" fill="#f0a020"/><circle cx="15" cy="17" r="6.500" fill="#e03a2a"/><circle cx="15" cy="17" r="3" fill="#a01a1a"/><path d="M4 6l3 5M10 3l2 6M20 3l-2 6M26 6l-3 5" stroke="#f0a020" stroke-width="2"/><path d="M20 14l6 8" stroke="#d8c8a8" stroke-width="2"/></svg>
<div class="a" style="left:422.5px;top:1431px;width:7px;height:3px;background:#8a8a8a;border-radius:1.500px"></div>
<svg class="a" style="left:466.0px;top:1395.0px;" width="30" height="30" viewBox="0 0 30 30"><path d="M22 1l7 3.500v21L22 29 6 16z" fill="#2a9df4"/><path d="M22 1L3 19l-3-2.500 4-3.500-4-3.500L3 7l19 18z" fill="#0a6fc2"/><path d="M22 9v12l-8-6z" fill="#d9d9d9"/></svg>
<div class="a" style="left:477.5px;top:1431px;width:7px;height:3px;background:#8a8a8a;border-radius:1.500px"></div>
<svg class="a" style="left:522.0px;top:1395.0px;" width="30" height="30" viewBox="0 0 30 30"><rect x="0.500" y="0.500" width="29" height="29" rx="2" fill="#b8110f" stroke="#8a0000" stroke-dasharray="2 1"/><path d="M5 24l4-18h10l-1 4h-5.500l-.8 3.500h5l-1 4h-5l-1.500 6.500z" fill="#fff"/><path d="M15 24l1-3.500 6-6h-5l1-3.500h9.500l-1 3.500-6 6h5.500l-1 3.500z" fill="#fff"/></svg>
<svg class="a" style="left:576.0px;top:1395.0px;" width="30" height="30" viewBox="0 0 30 30"><g transform="translate(15 15)"><circle r="11" fill="#b8110f"/><rect x="-3" y="-15" width="6" height="7" fill="#b8110f" transform="rotate(0)"/><rect x="-3" y="-15" width="6" height="7" fill="#b8110f" transform="rotate(45)"/><rect x="-3" y="-15" width="6" height="7" fill="#b8110f" transform="rotate(90)"/><rect x="-3" y="-15" width="6" height="7" fill="#b8110f" transform="rotate(135)"/><rect x="-3" y="-15" width="6" height="7" fill="#b8110f" transform="rotate(180)"/><rect x="-3" y="-15" width="6" height="7" fill="#b8110f" transform="rotate(225)"/><rect x="-3" y="-15" width="6" height="7" fill="#b8110f" transform="rotate(270)"/><rect x="-3" y="-15" width="6" height="7" fill="#b8110f" transform="rotate(315)"/></g><path d="M9 22l2.500-12h8l-.8 3h-4.400l-.5 2.500h4l-.8 3h-4l-1 3.500z" fill="#fff" opacity=".0"/><text x="8" y="21" font-family="Liberation Sans, sans-serif" font-size="15" font-weight="700" font-style="italic" fill="#fff">Fz</text></svg>
<svg class="a" style="left:632.0px;top:1395.0px;" width="28" height="30" viewBox="0 0 28 30"><path d="M14 1c4 3 8 4 13 4 0 12-4 19-13 24C5 24 1 17 1 5c5 0 9-1 13-4z" fill="#1a78d6"/><path d="M14 1c4 3 8 4 13 4 0 4-.4 7-1.300 10H14z" fill="#37a3f2"/><path d="M14 15h11.700C23.500 22 19 26.500 14 29z" fill="#0b5cb0"/></svg>
<svg class="a" style="left:687.0px;top:1395.5px;" width="30" height="29" viewBox="0 0 30 29"><rect x="0.500" y="0.500" width="29" height="28" rx="3" fill="#2a6a9a" stroke="#1a4a72"/><path d="M4 20c3-8 9-12 15-10 3 1 5 4 6 8-3-3-6-4-9-2-3 2-6 4-12 4z" fill="none" stroke="#e6eef5" stroke-width="1.500"/><path d="M6 6c4 2 7 6 8 12M20 5l4 5" stroke="#e6eef5" stroke-width="1.200" fill="none"/></svg>
<div class="a" style="left:698.5px;top:1431px;width:7px;height:3px;background:#8a8a8a;border-radius:1.500px"></div>
<svg class="a" style="left:740.5px;top:1394.5px;" width="29" height="31" viewBox="0 0 26 30"><path d="M6 4c-4 2-5 8-3 13 1 3 3 4 4 2l1-3c0 4 1 8 3 10 2 1 4 0 4-3v-6c3 0 6-1 7-4 2-5 0-9-4-10-3-1-5 0-6 1-2-1-4-1-6 0z" fill="#4a7fae"/><path d="M12 6c-2 3-2 8 0 12M15 5c3 2 4 6 3 10" stroke="#e6eef5" stroke-width="1.300" fill="none"/><circle cx="9" cy="10" r="1" fill="#fff"/></svg>
<svg class="a" style="left:796.0px;top:1396.0px;" width="30" height="28" viewBox="0 0 30 28"><path d="M2 10c4-3 8-2 10 0 4-3 9-5 14-9-1 6-3 10-7 13 1 4-2 8-7 8-6 0-11-4-10-12z" fill="#6a6458"/><circle cx="9" cy="12" r="3" fill="#fff"/><circle cx="9.500" cy="12.500" r="1.300" fill="#000"/><circle cx="16" cy="11" r="2.500" fill="#fff"/><circle cx="16" cy="11.500" r="1" fill="#000"/><ellipse cx="5" cy="17" rx="3" ry="2" fill="#222"/><path d="M14 20l14 7" stroke="#8a6a3a" stroke-width="2"/></svg>
<svg class="a" style="left:851.0px;top:1395.5px;" width="30" height="29" viewBox="0 0 30 29"><path d="M1 8V1h7M22 1h7v7M1 21v7h7M29 21v7h-7" fill="none" stroke="#3aa83a" stroke-width="2"/><path d="M6 7c0-3 12-3 12 0v10c0 3-12 3-12 0z" fill="#f5c842"/><ellipse cx="12" cy="7" rx="6" ry="2.300" fill="#fbe38a"/><path d="M14 16l10 10M24 16l-10 10" stroke="#e8742a" stroke-width="3"/></svg>
<svg class="a" style="left:905.0px;top:1395.0px;" width="30" height="30" viewBox="0 0 30 30"><path d="M3 2h18l5 5v21H3z" fill="#eaf5d8" stroke="#7a8a6a"/><rect x="4" y="20" width="21" height="7.500" fill="#4fb52a"/><path d="M8 8v10M8 13h8M12 10v6M16 10v6" stroke="#4a4a4a" stroke-width="1.300"/><path d="M27 2l2 2-12 17-3 1 1-3z" fill="#f0a020" stroke="#8a5a10" stroke-width=".8"/></svg>
<div class="a" style="left:916.5px;top:1431px;width:7px;height:3px;background:#8a8a8a;border-radius:1.500px"></div>
<svg class="a" style="left:963.5px;top:1395.0px;" width="25" height="30" viewBox="0 0 25 30"><path d="M2 1h15l7 7v20a1 1 0 01-1 1H2a1 1 0 01-1-1V2a1 1 0 011-1z" fill="#2db52d"/><path d="M17 1l7 7h-7z" fill="#8fe08f"/><rect x="5" y="13" width="14" height="9" fill="#d6f5d6"/><path d="M5 16h14M5 19h14M10 13v9M14.500 13v9" stroke="#2db52d"/></svg>
<svg class="a" style="left:1018.5px;top:1395.0px;" width="25" height="30" viewBox="0 0 25 30"><path d="M2 1h15l7 7v20a1 1 0 01-1 1H2a1 1 0 01-1-1V2a1 1 0 011-1z" fill="#1f7fd8"/><path d="M17 1l7 7h-7z" fill="#8fc4f5"/><path d="M5 13h8M5 16h8M5 19h14M5 22h14" stroke="#e6f2fd" stroke-width="1.500"/><rect x="14.500" y="12" width="5" height="5" fill="#e6f2fd"/></svg>
<svg class="a" style="left:1070.5px;top:1395.0px;" width="31" height="30" viewBox="0 0 31 30"><rect x="0.500" y="0.500" width="30" height="29" rx="5" fill="#111" stroke="#444"/><text x="3" y="22" font-family="Liberation Sans, sans-serif" font-size="13" font-weight="700" fill="#2a7be6">m</text><text x="13" y="23" font-family="Liberation Sans, sans-serif" font-size="19" font-weight="700" fill="#f2f2f2">R</text></svg>
<svg class="a" style="left:1127.0px;top:1395.0px;" width="28" height="30" viewBox="0 0 28 30"><circle cx="11" cy="11" r="10" fill="#3a9ad6"/><path d="M4 8c3-2 5 0 7 2s5 1 6 4-3 5-6 4-4-3-6-4-2-4-1-6z" fill="#6ac24a"/><rect x="15" y="10" width="11" height="19" fill="#b8bcc2" stroke="#7a7e84"/><path d="M17 14h7M17 18h7M17 22h7" stroke="#6a6e74"/><path d="M2 3l7 1-2 5z" fill="#f0a020"/></svg>
<svg class="a" style="left:1182.0px;top:1399.0px;" width="30" height="22" viewBox="0 0 30 22"><rect x="0" y="0" width="30" height="22" rx="2" fill="#3a3a3a"/><rect x="0" y="0" width="30" height="4" rx="2" fill="#6a6a6a"/><path d="M4 9l5 4-5 4" fill="none" stroke="#fff" stroke-width="2.200"/><path d="M12 17.500h9" stroke="#fff" stroke-width="2.200"/></svg>
<svg class="a" style="left:1237.0px;top:1394.0px;" width="30" height="30" viewBox="0 0 30 30"><circle cx="15" cy="15" r="14.500" fill="#fff"/><path d="M15 3l2 2.500-1 1.500 7 16h-3l-1.500-3.500h-7L10 23H7l7-16-1-1.500z" fill="#3a7bf0"/><path d="M15 11l2.500 6h-5z" fill="#fff"/><path d="M22 12l4 3-4 3z" fill="#3ddc84"/><path d="M8 12l-4 3 4 3z" fill="#3ddc84" opacity=".6"/></svg>
<div class="a" style="left:1242.5px;top:1430px;width:19px;height:3.5px;background:#0b6cd6;border-radius:2px"></div>
<svg class="a" style="left:1290.0px;top:1395.0px;" width="30" height="30" viewBox="0 0 30 30"><circle cx="15" cy="15" r="14.500" fill="#fff"/><path d="M15 15L2.440 7.750A14.500 14.500 0 0127.560 7.750z" fill="#ea4335"/><path d="M15 15L27.560 7.750A14.500 14.500 0 0115 29.500z" fill="#fbbc04"/><path d="M15 15L15 29.500A14.500 14.500 0 012.440 7.750z" fill="#34a853"/><circle cx="15" cy="15" r="7" fill="#fff"/><circle cx="15" cy="15" r="5.500" fill="#1a73e8"/></svg>
<div class="a" style="left:1301.5px;top:1431px;width:7px;height:3px;background:#8a8a8a;border-radius:1.500px"></div>
<svg class="a" style="left:1345.0px;top:1395.0px;" width="30" height="30" viewBox="0 0 30 30"><path d="M2 4l20-4 8 10-4 18-18 2-8-12z" fill="#1fc8e8"/><path d="M24 22l6-6-3 12-8 2z" fill="#f5e642"/><rect x="5" y="5" width="20" height="20" fill="#000"/><text x="6.500" y="15" font-family="Liberation Sans, sans-serif" font-size="9.500" font-weight="700" fill="#fff">WS</text><rect x="7" y="20.500" width="8" height="1.800" fill="#fff"/></svg>
<div class="a" style="left:1356.5px;top:1431px;width:7px;height:3px;background:#8a8a8a;border-radius:1.500px"></div>
<svg class="a" style="left:1399.5px;top:1394.5px;" width="31" height="31" viewBox="0 0 31 31"><path d="M1 1h9l-3 3 6 6-3 3-6-6-3 3z" fill="#2a8be6"/><path d="M11 13v-3a5 5 0 0110 0v3" fill="none" stroke="#9aa0a6" stroke-width="2.500"/><rect x="8" y="13" width="16" height="11" rx="1.500" fill="#b8bcc2" stroke="#7a7e84"/><path d="M30 30h-10l3.500-3.500-6-6 3-3 6 6 3.500-3.500z" fill="#3fbf3f"/></svg>
<div class="a" style="left:1411.5px;top:1431px;width:7px;height:3px;background:#8a8a8a;border-radius:1.500px"></div>
<svg class="a" style="left:1456.0px;top:1395.0px;" width="28" height="30" viewBox="0 0 28 30"><ellipse cx="13" cy="22" rx="12" ry="8" fill="#f5b81a"/><circle cx="14" cy="9" r="7.500" fill="#f8c832"/><path d="M19 9c3-.5 6 .5 7 2-2 1.500-5 1.500-7 .5z" fill="#e8682a"/><circle cx="16" cy="7" r="1.200" fill="#222"/><path d="M5 20c3 3 9 3 13-1" stroke="#e09a10" stroke-width="1.500" fill="none"/></svg>
<div class="a" style="left:1466.5px;top:1431px;width:7px;height:3px;background:#8a8a8a;border-radius:1.500px"></div>
<svg class="a" style="left:1510.0px;top:1395.0px;" width="30" height="30" viewBox="0 0 30 30"><path d="M9 5h12M15 0v10" stroke="#22b522" stroke-width="3.500"/><path d="M9 13h12" stroke="#d63a3a" stroke-width="3"/><path d="M23 20a8.500 7.500 0 11-3-5.500" fill="none" stroke="#333" stroke-width="4.500"/><path d="M15 21h9v7" fill="none" stroke="#333" stroke-width="4"/></svg>
<div class="a" style="left:1521.5px;top:1431px;width:7px;height:3px;background:#8a8a8a;border-radius:1.500px"></div>
<svg class="a" style="left:1568.0px;top:1395.0px;" width="24" height="30" viewBox="0 0 24 30"><path d="M1 1h15l7 7v21H1z" fill="#fff" stroke="#b5b5b5"/><path d="M16 1v7h7" fill="#f0f0f0" stroke="#b5b5b5"/></svg>
<div class="a" style="left:1576.5px;top:1431px;width:7px;height:3px;background:#8a8a8a;border-radius:1.500px"></div>
<div class="a" style="left:1620px;top:1395px;width:31px;height:30px;background:#fbf8c4;"></div>
<span class="t" style="left:1621px;top:1394px;font:700 15.500px 'Liberation Sans',sans-serif;color:#1a1a7a;line-height:15px;letter-spacing:-.6px">VB-<br>NET</span>
<div class="a" style="left:1631.5px;top:1431px;width:7px;height:3px;background:#8a8a8a;border-radius:1.500px"></div>
<svg class="a" style="left:2150.0px;top:1407.0px;" width="14" height="8" viewBox="0 0 14 8"><path d="M1 7l6-6 6 6" fill="none" stroke="#222" stroke-width="1.600"/></svg>
<svg class="a" style="left:2188.0px;top:1400.0px;" width="20" height="20" viewBox="0 0 20 20"><rect width="20" height="20" fill="#d6163a"/><path d="M4 5h7l3 3v6l-3-3V8H7z" fill="#fff"/><path d="M4 14l3-3h3l-3 3z" fill="#fff"/><path d="M16.500 8v5M16.500 14.500v1.500" stroke="#fff" stroke-width="1.500"/></svg>
<svg class="a" style="left:2228.0px;top:1400.0px;" width="20" height="20" viewBox="0 0 20 20"><rect width="20" height="20" fill="#f0412f"/><path d="M8 5.500l4.500 4.500-4.500 4.500-4.500-4.500z" fill="#fff"/><path d="M11.500 5.500l4.500 4.500-4.500 4.500" fill="none" stroke="#fff" stroke-width="1.500"/></svg>
<svg class="a" style="left:2270.0px;top:1399.0px;" width="16" height="22" viewBox="0 0 16 22"><rect x="4" y="0.700" width="7" height="5" fill="none" stroke="#222" stroke-width="1.200"/><rect x="2" y="5.700" width="10" height="14" rx="1" fill="#f4f4f4" stroke="#222" stroke-width="1.200"/><path d="M10 17.500l3 3 3-4" fill="none" stroke="#222" stroke-width="1.200"/></svg>
<svg class="a" style="left:2310.0px;top:1400.0px;" width="16" height="20" viewBox="0 0 16 20"><path d="M1 1h14v11a7 7 0 01-14 0z" fill="#f4f4f4" stroke="#c0c0c0"/><path d="M8 1v7M1 8h14" stroke="#d0d0d0"/><path d="M6 12l4 4M10 12l-4 4" stroke="#8a8a8a" stroke-width="1.200"/></svg>
<div class="a" style="left:2348px;top:1400px;width:20px;height:20px;background:#f9f9f9;border:1px solid #b5b5b5"></div>
<svg class="a" style="left:2386.0px;top:1399.0px;" width="22" height="22" viewBox="0 0 22 22"><rect x="0.700" y="2.700" width="15" height="12" fill="none" stroke="#222" stroke-width="1.300"/><path d="M8 15v4M3.500 19.500h12" stroke="#222" stroke-width="1.300"/><rect x="15.500" y="0.700" width="5" height="6" rx="1" fill="#f4f4f4" stroke="#222" stroke-width="1.200"/><path d="M18 7v13" stroke="#222" stroke-width="1.200"/></svg>
<svg class="a" style="left:2416.5px;top:1401.0px;" width="22" height="18" viewBox="0 0 22 18"><path d="M1 6h4l5-4.500v15l-5-4.500h-4z" fill="none" stroke="#222" stroke-width="1.300"/><path d="M13 6a4 4 0 010 6M15.500 3.500a7.500 7.500 0 010 11M18 1a11 11 0 010 16" fill="none" stroke="#222" stroke-width="1.300"/></svg>
<span class="t" style="right:25px;top:1387.5px;height:24px;line-height:24px;font:400 14.5px 'Liberation Sans', sans-serif;line-height:24px;color:#111;letter-spacing:.2px;">05:52</span>
<span class="t" style="right:25px;top:1408.5px;height:24px;line-height:24px;font:400 14.5px 'Liberation Sans', sans-serif;line-height:24px;color:#111;letter-spacing:.2px;">27/02/2025</span>
</body></html>
